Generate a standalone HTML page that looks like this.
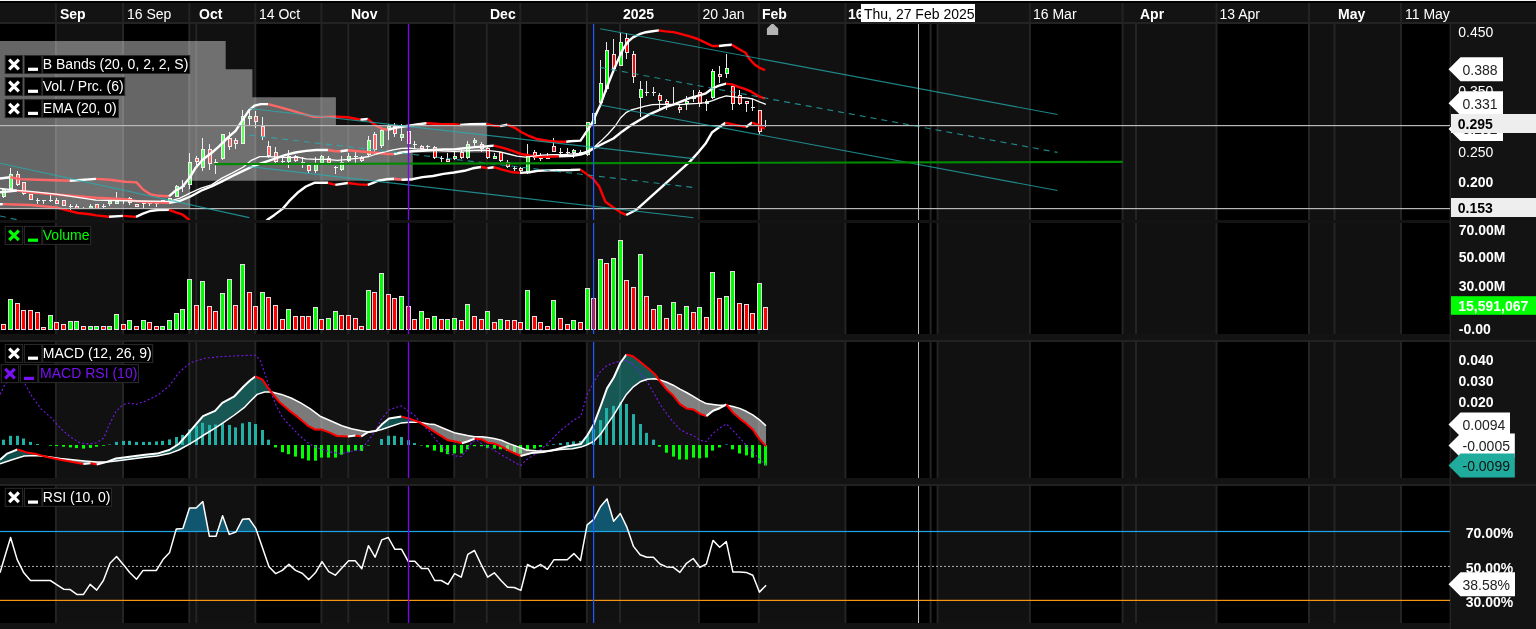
<!DOCTYPE html>
<html><head><meta charset="utf-8"><title>Chart</title><style>html,body{margin:0;padding:0;background:#131313;overflow:hidden}</style></head><body>
<svg width="1536" height="629" viewBox="0 0 1536 629" style="display:block;will-change:transform">
<defs>
<clipPath id="cp0"><rect x="0" y="24" width="1450" height="196"/></clipPath>
<clipPath id="cp1"><rect x="0" y="223" width="1450" height="111"/></clipPath>
<clipPath id="cp2"><rect x="0" y="342" width="1450" height="136"/></clipPath>
<clipPath id="cp3"><rect x="0" y="486" width="1450" height="137"/></clipPath>
</defs>
<rect width="1536" height="629" fill="#131313"/>
<rect x="0" y="0" width="1536" height="1" fill="#f4f4f4"/>
<rect x="0" y="1" width="1536" height="2" fill="#000"/>
<rect x="0" y="24" width="1450" height="196" fill="#000"/>
<rect x="55.9" y="24" width="67.1" height="196" fill="#111111"/>
<rect x="189.3" y="24" width="66.0" height="196" fill="#111111"/>
<rect x="321.4" y="24" width="66.9" height="196" fill="#111111"/>
<rect x="454.3" y="24" width="66.0" height="196" fill="#111111"/>
<rect x="586.9" y="24" width="112.0" height="196" fill="#111111"/>
<rect x="758.8" y="24" width="86.6" height="196" fill="#111111"/>
<rect x="937.6" y="24" width="92.3" height="196" fill="#111111"/>
<rect x="1122.6" y="24" width="93.9" height="196" fill="#111111"/>
<rect x="1309.0" y="24" width="92.0" height="196" fill="#111111"/>
<rect x="54.9" y="24" width="2" height="196" fill="#242424"/>
<rect x="122.0" y="24" width="2" height="196" fill="#242424"/>
<rect x="188.3" y="24" width="2" height="196" fill="#242424"/>
<rect x="254.3" y="24" width="2" height="196" fill="#242424"/>
<rect x="320.4" y="24" width="2" height="196" fill="#242424"/>
<rect x="387.3" y="24" width="2" height="196" fill="#242424"/>
<rect x="453.3" y="24" width="2" height="196" fill="#242424"/>
<rect x="519.3" y="24" width="2" height="196" fill="#242424"/>
<rect x="585.9" y="24" width="2" height="196" fill="#242424"/>
<rect x="697.9" y="24" width="2" height="196" fill="#242424"/>
<rect x="757.8" y="24" width="2" height="196" fill="#242424"/>
<rect x="844.4" y="24" width="2" height="196" fill="#242424"/>
<rect x="936.6" y="24" width="2" height="196" fill="#242424"/>
<rect x="1028.9" y="24" width="2" height="196" fill="#242424"/>
<rect x="1121.6" y="24" width="2" height="196" fill="#242424"/>
<rect x="1215.5" y="24" width="2" height="196" fill="#242424"/>
<rect x="1308.0" y="24" width="2" height="196" fill="#242424"/>
<rect x="1400.0" y="24" width="2" height="196" fill="#242424"/>
<rect x="195.3" y="24" width="2" height="196" fill="#242424"/>
<rect x="347.3" y="24" width="2" height="196" fill="#242424"/>
<rect x="485.8" y="24" width="2" height="196" fill="#242424"/>
<rect x="619.0" y="24" width="2" height="196" fill="#242424"/>
<rect x="929.6" y="24" width="2" height="196" fill="#242424"/>
<rect x="1135.0" y="24" width="2" height="196" fill="#242424"/>
<rect x="1333.5" y="24" width="2" height="196" fill="#242424"/>
<rect x="0" y="223" width="1450" height="111" fill="#000"/>
<rect x="55.9" y="223" width="67.1" height="111" fill="#111111"/>
<rect x="189.3" y="223" width="66.0" height="111" fill="#111111"/>
<rect x="321.4" y="223" width="66.9" height="111" fill="#111111"/>
<rect x="454.3" y="223" width="66.0" height="111" fill="#111111"/>
<rect x="586.9" y="223" width="112.0" height="111" fill="#111111"/>
<rect x="758.8" y="223" width="86.6" height="111" fill="#111111"/>
<rect x="937.6" y="223" width="92.3" height="111" fill="#111111"/>
<rect x="1122.6" y="223" width="93.9" height="111" fill="#111111"/>
<rect x="1309.0" y="223" width="92.0" height="111" fill="#111111"/>
<rect x="54.9" y="223" width="2" height="111" fill="#242424"/>
<rect x="122.0" y="223" width="2" height="111" fill="#242424"/>
<rect x="188.3" y="223" width="2" height="111" fill="#242424"/>
<rect x="254.3" y="223" width="2" height="111" fill="#242424"/>
<rect x="320.4" y="223" width="2" height="111" fill="#242424"/>
<rect x="387.3" y="223" width="2" height="111" fill="#242424"/>
<rect x="453.3" y="223" width="2" height="111" fill="#242424"/>
<rect x="519.3" y="223" width="2" height="111" fill="#242424"/>
<rect x="585.9" y="223" width="2" height="111" fill="#242424"/>
<rect x="697.9" y="223" width="2" height="111" fill="#242424"/>
<rect x="757.8" y="223" width="2" height="111" fill="#242424"/>
<rect x="844.4" y="223" width="2" height="111" fill="#242424"/>
<rect x="936.6" y="223" width="2" height="111" fill="#242424"/>
<rect x="1028.9" y="223" width="2" height="111" fill="#242424"/>
<rect x="1121.6" y="223" width="2" height="111" fill="#242424"/>
<rect x="1215.5" y="223" width="2" height="111" fill="#242424"/>
<rect x="1308.0" y="223" width="2" height="111" fill="#242424"/>
<rect x="1400.0" y="223" width="2" height="111" fill="#242424"/>
<rect x="195.3" y="223" width="2" height="111" fill="#242424"/>
<rect x="347.3" y="223" width="2" height="111" fill="#242424"/>
<rect x="485.8" y="223" width="2" height="111" fill="#242424"/>
<rect x="619.0" y="223" width="2" height="111" fill="#242424"/>
<rect x="929.6" y="223" width="2" height="111" fill="#242424"/>
<rect x="1135.0" y="223" width="2" height="111" fill="#242424"/>
<rect x="1333.5" y="223" width="2" height="111" fill="#242424"/>
<rect x="0" y="342" width="1450" height="136" fill="#000"/>
<rect x="55.9" y="342" width="67.1" height="136" fill="#111111"/>
<rect x="189.3" y="342" width="66.0" height="136" fill="#111111"/>
<rect x="321.4" y="342" width="66.9" height="136" fill="#111111"/>
<rect x="454.3" y="342" width="66.0" height="136" fill="#111111"/>
<rect x="586.9" y="342" width="112.0" height="136" fill="#111111"/>
<rect x="758.8" y="342" width="86.6" height="136" fill="#111111"/>
<rect x="937.6" y="342" width="92.3" height="136" fill="#111111"/>
<rect x="1122.6" y="342" width="93.9" height="136" fill="#111111"/>
<rect x="1309.0" y="342" width="92.0" height="136" fill="#111111"/>
<rect x="54.9" y="342" width="2" height="136" fill="#242424"/>
<rect x="122.0" y="342" width="2" height="136" fill="#242424"/>
<rect x="188.3" y="342" width="2" height="136" fill="#242424"/>
<rect x="254.3" y="342" width="2" height="136" fill="#242424"/>
<rect x="320.4" y="342" width="2" height="136" fill="#242424"/>
<rect x="387.3" y="342" width="2" height="136" fill="#242424"/>
<rect x="453.3" y="342" width="2" height="136" fill="#242424"/>
<rect x="519.3" y="342" width="2" height="136" fill="#242424"/>
<rect x="585.9" y="342" width="2" height="136" fill="#242424"/>
<rect x="697.9" y="342" width="2" height="136" fill="#242424"/>
<rect x="757.8" y="342" width="2" height="136" fill="#242424"/>
<rect x="844.4" y="342" width="2" height="136" fill="#242424"/>
<rect x="936.6" y="342" width="2" height="136" fill="#242424"/>
<rect x="1028.9" y="342" width="2" height="136" fill="#242424"/>
<rect x="1121.6" y="342" width="2" height="136" fill="#242424"/>
<rect x="1215.5" y="342" width="2" height="136" fill="#242424"/>
<rect x="1308.0" y="342" width="2" height="136" fill="#242424"/>
<rect x="1400.0" y="342" width="2" height="136" fill="#242424"/>
<rect x="195.3" y="342" width="2" height="136" fill="#242424"/>
<rect x="347.3" y="342" width="2" height="136" fill="#242424"/>
<rect x="485.8" y="342" width="2" height="136" fill="#242424"/>
<rect x="619.0" y="342" width="2" height="136" fill="#242424"/>
<rect x="929.6" y="342" width="2" height="136" fill="#242424"/>
<rect x="1135.0" y="342" width="2" height="136" fill="#242424"/>
<rect x="1333.5" y="342" width="2" height="136" fill="#242424"/>
<rect x="0" y="486" width="1450" height="137" fill="#000"/>
<rect x="55.9" y="486" width="67.1" height="137" fill="#111111"/>
<rect x="189.3" y="486" width="66.0" height="137" fill="#111111"/>
<rect x="321.4" y="486" width="66.9" height="137" fill="#111111"/>
<rect x="454.3" y="486" width="66.0" height="137" fill="#111111"/>
<rect x="586.9" y="486" width="112.0" height="137" fill="#111111"/>
<rect x="758.8" y="486" width="86.6" height="137" fill="#111111"/>
<rect x="937.6" y="486" width="92.3" height="137" fill="#111111"/>
<rect x="1122.6" y="486" width="93.9" height="137" fill="#111111"/>
<rect x="1309.0" y="486" width="92.0" height="137" fill="#111111"/>
<rect x="54.9" y="486" width="2" height="137" fill="#242424"/>
<rect x="122.0" y="486" width="2" height="137" fill="#242424"/>
<rect x="188.3" y="486" width="2" height="137" fill="#242424"/>
<rect x="254.3" y="486" width="2" height="137" fill="#242424"/>
<rect x="320.4" y="486" width="2" height="137" fill="#242424"/>
<rect x="387.3" y="486" width="2" height="137" fill="#242424"/>
<rect x="453.3" y="486" width="2" height="137" fill="#242424"/>
<rect x="519.3" y="486" width="2" height="137" fill="#242424"/>
<rect x="585.9" y="486" width="2" height="137" fill="#242424"/>
<rect x="697.9" y="486" width="2" height="137" fill="#242424"/>
<rect x="757.8" y="486" width="2" height="137" fill="#242424"/>
<rect x="844.4" y="486" width="2" height="137" fill="#242424"/>
<rect x="936.6" y="486" width="2" height="137" fill="#242424"/>
<rect x="1028.9" y="486" width="2" height="137" fill="#242424"/>
<rect x="1121.6" y="486" width="2" height="137" fill="#242424"/>
<rect x="1215.5" y="486" width="2" height="137" fill="#242424"/>
<rect x="1308.0" y="486" width="2" height="137" fill="#242424"/>
<rect x="1400.0" y="486" width="2" height="137" fill="#242424"/>
<rect x="195.3" y="486" width="2" height="137" fill="#242424"/>
<rect x="347.3" y="486" width="2" height="137" fill="#242424"/>
<rect x="485.8" y="486" width="2" height="137" fill="#242424"/>
<rect x="619.0" y="486" width="2" height="137" fill="#242424"/>
<rect x="929.6" y="486" width="2" height="137" fill="#242424"/>
<rect x="1135.0" y="486" width="2" height="137" fill="#242424"/>
<rect x="1333.5" y="486" width="2" height="137" fill="#242424"/>
<rect x="0" y="340" width="1536" height="2" fill="#222222"/>
<rect x="0" y="484" width="1536" height="2" fill="#222222"/>
<rect x="0" y="22" width="1536" height="2" fill="#232323"/>
<rect x="54.9" y="3" width="2" height="19" fill="#232323"/>
<rect x="122.0" y="3" width="2" height="19" fill="#232323"/>
<rect x="188.3" y="3" width="2" height="19" fill="#232323"/>
<rect x="254.3" y="3" width="2" height="19" fill="#232323"/>
<rect x="320.4" y="3" width="2" height="19" fill="#232323"/>
<rect x="387.3" y="3" width="2" height="19" fill="#232323"/>
<rect x="453.3" y="3" width="2" height="19" fill="#232323"/>
<rect x="519.3" y="3" width="2" height="19" fill="#232323"/>
<rect x="585.9" y="3" width="2" height="19" fill="#232323"/>
<rect x="697.9" y="3" width="2" height="19" fill="#232323"/>
<rect x="757.8" y="3" width="2" height="19" fill="#232323"/>
<rect x="844.4" y="3" width="2" height="19" fill="#232323"/>
<rect x="936.6" y="3" width="2" height="19" fill="#232323"/>
<rect x="1028.9" y="3" width="2" height="19" fill="#232323"/>
<rect x="1121.6" y="3" width="2" height="19" fill="#232323"/>
<rect x="1215.5" y="3" width="2" height="19" fill="#232323"/>
<rect x="1308.0" y="3" width="2" height="19" fill="#232323"/>
<rect x="1400.0" y="3" width="2" height="19" fill="#232323"/>
<rect x="1449.5" y="24" width="1.5" height="605" fill="#232323"/>
<text x="60" y="19" font-family="Liberation Sans, Arial, sans-serif" font-size="14" fill="#fff" font-weight="bold">Sep</text>
<text x="127" y="19" font-family="Liberation Sans, Arial, sans-serif" font-size="14" fill="#fff">16 Sep</text>
<text x="199" y="19" font-family="Liberation Sans, Arial, sans-serif" font-size="14" fill="#fff" font-weight="bold">Oct</text>
<text x="259" y="19" font-family="Liberation Sans, Arial, sans-serif" font-size="14" fill="#fff">14 Oct</text>
<text x="351" y="19" font-family="Liberation Sans, Arial, sans-serif" font-size="14" fill="#fff" font-weight="bold">Nov</text>
<text x="490" y="19" font-family="Liberation Sans, Arial, sans-serif" font-size="14" fill="#fff" font-weight="bold">Dec</text>
<text x="623" y="19" font-family="Liberation Sans, Arial, sans-serif" font-size="14" fill="#fff" font-weight="bold">2025</text>
<text x="702.5" y="19" font-family="Liberation Sans, Arial, sans-serif" font-size="14" fill="#fff">20 Jan</text>
<text x="762" y="19" font-family="Liberation Sans, Arial, sans-serif" font-size="14" fill="#fff" font-weight="bold">Feb</text>
<text x="848" y="19" font-family="Liberation Sans, Arial, sans-serif" font-size="14" fill="#fff" font-weight="bold">16 Feb</text>
<text x="1033" y="19" font-family="Liberation Sans, Arial, sans-serif" font-size="14" fill="#fff">16 Mar</text>
<text x="1140" y="19" font-family="Liberation Sans, Arial, sans-serif" font-size="14" fill="#fff" font-weight="bold">Apr</text>
<text x="1219.5" y="19" font-family="Liberation Sans, Arial, sans-serif" font-size="14" fill="#fff">13 Apr</text>
<text x="1338" y="19" font-family="Liberation Sans, Arial, sans-serif" font-size="14" fill="#fff" font-weight="bold">May</text>
<text x="1405" y="19" font-family="Liberation Sans, Arial, sans-serif" font-size="14" fill="#fff">11 May</text>
<rect x="861" y="4" width="114" height="18" fill="#fff"/>
<text x="864" y="18.5" font-family="Liberation Sans, Arial, sans-serif" font-size="14" fill="#000">Thu, 27 Feb 2025</text>
<g clip-path="url(#cp0)">
<rect x="3" y="188" width="1" height="10" fill="#e6e6e6"/>
<rect x="2" y="189" width="4" height="8" fill="#e6e6e6"/>
<rect x="3" y="190" width="2" height="6" fill="#00ff00"/>
<rect x="10" y="168" width="1" height="22" fill="#e6e6e6"/>
<rect x="9" y="174" width="4" height="15" fill="#e6e6e6"/>
<rect x="10" y="175" width="2" height="13" fill="#00ff00"/>
<rect x="17" y="171" width="1" height="15" fill="#e6e6e6"/>
<rect x="16" y="174" width="4" height="11" fill="#e6e6e6"/>
<rect x="17" y="175" width="2" height="9" fill="#ff0000"/>
<rect x="23" y="182" width="1" height="13" fill="#e6e6e6"/>
<rect x="22" y="182" width="4" height="12" fill="#e6e6e6"/>
<rect x="23" y="183" width="2" height="10" fill="#ff0000"/>
<rect x="30" y="194" width="1" height="6" fill="#e6e6e6"/>
<rect x="29" y="194" width="4" height="6" fill="#e6e6e6"/>
<rect x="30" y="195" width="2" height="4" fill="#ff0000"/>
<rect x="37" y="198" width="1" height="6" fill="#e6e6e6"/>
<rect x="36" y="200" width="4" height="1" fill="#e6e6e6"/>
<rect x="43" y="201" width="1" height="3" fill="#e6e6e6"/>
<rect x="42" y="200" width="4" height="1" fill="#e6e6e6"/>
<rect x="50" y="195" width="1" height="7" fill="#e6e6e6"/>
<rect x="49" y="200" width="4" height="1" fill="#e6e6e6"/>
<rect x="56" y="198" width="1" height="6" fill="#e6e6e6"/>
<rect x="55" y="200" width="4" height="4" fill="#e6e6e6"/>
<rect x="56" y="201" width="2" height="2" fill="#ff0000"/>
<rect x="63" y="200" width="1" height="6" fill="#e6e6e6"/>
<rect x="62" y="200" width="4" height="6" fill="#e6e6e6"/>
<rect x="63" y="201" width="2" height="4" fill="#ff0000"/>
<rect x="70" y="204" width="1" height="6" fill="#e6e6e6"/>
<rect x="69" y="206" width="4" height="1" fill="#e6e6e6"/>
<rect x="76" y="204" width="1" height="5" fill="#e6e6e6"/>
<rect x="75" y="206" width="4" height="3" fill="#e6e6e6"/>
<rect x="76" y="207" width="2" height="1" fill="#ff0000"/>
<rect x="83" y="207" width="1" height="2" fill="#e6e6e6"/>
<rect x="82" y="208" width="4" height="1" fill="#e6e6e6"/>
<rect x="90" y="204" width="1" height="4" fill="#e6e6e6"/>
<rect x="89" y="206" width="4" height="3" fill="#e6e6e6"/>
<rect x="90" y="207" width="2" height="1" fill="#00ff00"/>
<rect x="96" y="204" width="1" height="5" fill="#e6e6e6"/>
<rect x="95" y="204" width="4" height="5" fill="#e6e6e6"/>
<rect x="96" y="205" width="2" height="3" fill="#ff0000"/>
<rect x="103" y="204" width="1" height="4" fill="#e6e6e6"/>
<rect x="102" y="206" width="4" height="1" fill="#e6e6e6"/>
<rect x="109" y="201" width="1" height="5" fill="#e6e6e6"/>
<rect x="108" y="201" width="4" height="3" fill="#e6e6e6"/>
<rect x="109" y="202" width="2" height="1" fill="#00ff00"/>
<rect x="116" y="192" width="1" height="12" fill="#e6e6e6"/>
<rect x="115" y="201" width="4" height="3" fill="#e6e6e6"/>
<rect x="116" y="202" width="2" height="1" fill="#00ff00"/>
<rect x="123" y="201" width="1" height="3" fill="#e6e6e6"/>
<rect x="122" y="200" width="4" height="1" fill="#e6e6e6"/>
<rect x="129" y="197" width="1" height="8" fill="#e6e6e6"/>
<rect x="128" y="198" width="4" height="5" fill="#e6e6e6"/>
<rect x="129" y="199" width="2" height="3" fill="#ff0000"/>
<rect x="136" y="204" width="1" height="2" fill="#e6e6e6"/>
<rect x="135" y="204" width="4" height="3" fill="#e6e6e6"/>
<rect x="136" y="205" width="2" height="1" fill="#ff0000"/>
<rect x="143" y="204" width="1" height="4" fill="#e6e6e6"/>
<rect x="142" y="203" width="4" height="1" fill="#e6e6e6"/>
<rect x="149" y="204" width="1" height="2" fill="#e6e6e6"/>
<rect x="148" y="203" width="4" height="1" fill="#e6e6e6"/>
<rect x="156" y="204" width="1" height="3" fill="#e6e6e6"/>
<rect x="155" y="203" width="4" height="1" fill="#e6e6e6"/>
<rect x="161" y="200" width="4" height="1" fill="#e6e6e6"/>
<rect x="169" y="198" width="1" height="2" fill="#e6e6e6"/>
<rect x="168" y="198" width="4" height="3" fill="#e6e6e6"/>
<rect x="169" y="199" width="2" height="1" fill="#00ff00"/>
<rect x="176" y="185" width="1" height="12" fill="#e6e6e6"/>
<rect x="175" y="186" width="4" height="11" fill="#e6e6e6"/>
<rect x="176" y="187" width="2" height="9" fill="#00ff00"/>
<rect x="182" y="180" width="1" height="12" fill="#e6e6e6"/>
<rect x="181" y="186" width="4" height="1" fill="#e6e6e6"/>
<rect x="189" y="153" width="1" height="36" fill="#e6e6e6"/>
<rect x="188" y="162" width="4" height="23" fill="#e6e6e6"/>
<rect x="189" y="163" width="2" height="21" fill="#00ff00"/>
<rect x="196" y="156" width="1" height="11" fill="#e6e6e6"/>
<rect x="195" y="158" width="4" height="4" fill="#e6e6e6"/>
<rect x="196" y="159" width="2" height="2" fill="#ff0000"/>
<rect x="202" y="138" width="1" height="33" fill="#e6e6e6"/>
<rect x="201" y="149" width="4" height="19" fill="#e6e6e6"/>
<rect x="202" y="150" width="2" height="17" fill="#00ff00"/>
<rect x="209" y="144" width="1" height="26" fill="#e6e6e6"/>
<rect x="208" y="149" width="4" height="15" fill="#e6e6e6"/>
<rect x="209" y="150" width="2" height="13" fill="#ff0000"/>
<rect x="215" y="159" width="1" height="15" fill="#e6e6e6"/>
<rect x="214" y="162" width="4" height="1" fill="#e6e6e6"/>
<rect x="222" y="134" width="1" height="26" fill="#e6e6e6"/>
<rect x="221" y="134" width="4" height="25" fill="#e6e6e6"/>
<rect x="222" y="135" width="2" height="23" fill="#00ff00"/>
<rect x="229" y="132" width="1" height="18" fill="#e6e6e6"/>
<rect x="228" y="138" width="4" height="9" fill="#e6e6e6"/>
<rect x="229" y="139" width="2" height="7" fill="#ff0000"/>
<rect x="235" y="138" width="1" height="11" fill="#e6e6e6"/>
<rect x="234" y="140" width="4" height="4" fill="#e6e6e6"/>
<rect x="235" y="141" width="2" height="2" fill="#ff0000"/>
<rect x="242" y="110" width="1" height="34" fill="#e6e6e6"/>
<rect x="241" y="116" width="4" height="28" fill="#e6e6e6"/>
<rect x="242" y="117" width="2" height="26" fill="#00ff00"/>
<rect x="249" y="110" width="1" height="15" fill="#e6e6e6"/>
<rect x="248" y="116" width="4" height="3" fill="#e6e6e6"/>
<rect x="249" y="117" width="2" height="1" fill="#00ff00"/>
<rect x="255" y="111" width="1" height="17" fill="#e6e6e6"/>
<rect x="254" y="116" width="4" height="6" fill="#e6e6e6"/>
<rect x="255" y="117" width="2" height="4" fill="#ff0000"/>
<rect x="262" y="117" width="1" height="23" fill="#e6e6e6"/>
<rect x="261" y="126" width="4" height="11" fill="#e6e6e6"/>
<rect x="262" y="127" width="2" height="9" fill="#ff0000"/>
<rect x="268" y="141" width="1" height="17" fill="#e6e6e6"/>
<rect x="267" y="146" width="4" height="10" fill="#e6e6e6"/>
<rect x="268" y="147" width="2" height="8" fill="#ff0000"/>
<rect x="275" y="147" width="1" height="17" fill="#e6e6e6"/>
<rect x="274" y="152" width="4" height="10" fill="#e6e6e6"/>
<rect x="275" y="153" width="2" height="8" fill="#ff0000"/>
<rect x="282" y="156" width="1" height="8" fill="#e6e6e6"/>
<rect x="281" y="161" width="4" height="1" fill="#e6e6e6"/>
<rect x="288" y="150" width="1" height="18" fill="#e6e6e6"/>
<rect x="287" y="156" width="4" height="6" fill="#e6e6e6"/>
<rect x="288" y="157" width="2" height="4" fill="#00ff00"/>
<rect x="295" y="155" width="1" height="7" fill="#e6e6e6"/>
<rect x="294" y="156" width="4" height="5" fill="#e6e6e6"/>
<rect x="295" y="157" width="2" height="3" fill="#ff0000"/>
<rect x="302" y="157" width="1" height="11" fill="#e6e6e6"/>
<rect x="301" y="162" width="4" height="1" fill="#e6e6e6"/>
<rect x="308" y="164" width="1" height="9" fill="#e6e6e6"/>
<rect x="307" y="165" width="4" height="6" fill="#e6e6e6"/>
<rect x="308" y="166" width="2" height="4" fill="#ff0000"/>
<rect x="315" y="157" width="1" height="16" fill="#e6e6e6"/>
<rect x="314" y="164" width="4" height="7" fill="#e6e6e6"/>
<rect x="315" y="165" width="2" height="5" fill="#00ff00"/>
<rect x="321" y="155" width="1" height="9" fill="#e6e6e6"/>
<rect x="320" y="156" width="4" height="7" fill="#e6e6e6"/>
<rect x="321" y="157" width="2" height="5" fill="#00ff00"/>
<rect x="328" y="156" width="1" height="8" fill="#e6e6e6"/>
<rect x="327" y="158" width="4" height="5" fill="#e6e6e6"/>
<rect x="328" y="159" width="2" height="3" fill="#ff0000"/>
<rect x="335" y="166" width="1" height="8" fill="#e6e6e6"/>
<rect x="334" y="167" width="4" height="1" fill="#e6e6e6"/>
<rect x="341" y="156" width="1" height="15" fill="#e6e6e6"/>
<rect x="340" y="162" width="4" height="8" fill="#e6e6e6"/>
<rect x="341" y="163" width="2" height="6" fill="#00ff00"/>
<rect x="348" y="153" width="1" height="9" fill="#e6e6e6"/>
<rect x="347" y="156" width="4" height="5" fill="#e6e6e6"/>
<rect x="348" y="157" width="2" height="3" fill="#00ff00"/>
<rect x="355" y="152" width="1" height="12" fill="#e6e6e6"/>
<rect x="354" y="156" width="4" height="1" fill="#e6e6e6"/>
<rect x="361" y="156" width="1" height="6" fill="#e6e6e6"/>
<rect x="360" y="158" width="4" height="3" fill="#e6e6e6"/>
<rect x="361" y="159" width="2" height="1" fill="#ff0000"/>
<rect x="368" y="136" width="1" height="20" fill="#e6e6e6"/>
<rect x="367" y="140" width="4" height="15" fill="#e6e6e6"/>
<rect x="368" y="141" width="2" height="13" fill="#00ff00"/>
<rect x="374" y="132" width="1" height="20" fill="#e6e6e6"/>
<rect x="373" y="134" width="4" height="16" fill="#e6e6e6"/>
<rect x="374" y="135" width="2" height="14" fill="#ff0000"/>
<rect x="381" y="129" width="1" height="19" fill="#e6e6e6"/>
<rect x="380" y="130" width="4" height="16" fill="#e6e6e6"/>
<rect x="381" y="131" width="2" height="14" fill="#00ff00"/>
<rect x="388" y="124" width="1" height="16" fill="#e6e6e6"/>
<rect x="387" y="126" width="4" height="3" fill="#e6e6e6"/>
<rect x="388" y="127" width="2" height="1" fill="#00ff00"/>
<rect x="394" y="123" width="1" height="14" fill="#e6e6e6"/>
<rect x="393" y="126" width="4" height="8" fill="#e6e6e6"/>
<rect x="394" y="127" width="2" height="6" fill="#ff0000"/>
<rect x="401" y="124" width="1" height="17" fill="#e6e6e6"/>
<rect x="400" y="134" width="4" height="4" fill="#e6e6e6"/>
<rect x="401" y="135" width="2" height="2" fill="#00ff00"/>
<rect x="408" y="126" width="1" height="18" fill="#e6e6e6"/>
<rect x="407" y="131" width="4" height="13" fill="#e6e6e6"/>
<rect x="408" y="132" width="2" height="11" fill="#ff0000"/>
<rect x="414" y="141" width="1" height="7" fill="#e6e6e6"/>
<rect x="413" y="144" width="4" height="1" fill="#e6e6e6"/>
<rect x="421" y="145" width="1" height="5" fill="#e6e6e6"/>
<rect x="420" y="146" width="4" height="3" fill="#e6e6e6"/>
<rect x="421" y="147" width="2" height="1" fill="#ff0000"/>
<rect x="427" y="145" width="1" height="5" fill="#e6e6e6"/>
<rect x="426" y="146" width="4" height="1" fill="#e6e6e6"/>
<rect x="434" y="146" width="1" height="13" fill="#e6e6e6"/>
<rect x="433" y="147" width="4" height="11" fill="#e6e6e6"/>
<rect x="434" y="148" width="2" height="9" fill="#ff0000"/>
<rect x="441" y="156" width="1" height="6" fill="#e6e6e6"/>
<rect x="440" y="158" width="4" height="1" fill="#e6e6e6"/>
<rect x="447" y="153" width="1" height="9" fill="#e6e6e6"/>
<rect x="446" y="159" width="4" height="3" fill="#e6e6e6"/>
<rect x="447" y="160" width="2" height="1" fill="#ff0000"/>
<rect x="454" y="151" width="1" height="9" fill="#e6e6e6"/>
<rect x="453" y="156" width="4" height="3" fill="#e6e6e6"/>
<rect x="454" y="157" width="2" height="1" fill="#00ff00"/>
<rect x="461" y="150" width="1" height="9" fill="#e6e6e6"/>
<rect x="460" y="152" width="4" height="6" fill="#e6e6e6"/>
<rect x="461" y="153" width="2" height="4" fill="#ff0000"/>
<rect x="467" y="141" width="1" height="18" fill="#e6e6e6"/>
<rect x="466" y="144" width="4" height="14" fill="#e6e6e6"/>
<rect x="467" y="145" width="2" height="12" fill="#00ff00"/>
<rect x="474" y="138" width="1" height="8" fill="#e6e6e6"/>
<rect x="473" y="140" width="4" height="3" fill="#e6e6e6"/>
<rect x="474" y="141" width="2" height="1" fill="#00ff00"/>
<rect x="481" y="142" width="1" height="10" fill="#e6e6e6"/>
<rect x="480" y="144" width="4" height="5" fill="#e6e6e6"/>
<rect x="481" y="145" width="2" height="3" fill="#ff0000"/>
<rect x="487" y="145" width="1" height="14" fill="#e6e6e6"/>
<rect x="486" y="148" width="4" height="10" fill="#e6e6e6"/>
<rect x="487" y="149" width="2" height="8" fill="#ff0000"/>
<rect x="494" y="153" width="1" height="6" fill="#e6e6e6"/>
<rect x="493" y="156" width="4" height="3" fill="#e6e6e6"/>
<rect x="494" y="157" width="2" height="1" fill="#00ff00"/>
<rect x="500" y="152" width="1" height="10" fill="#e6e6e6"/>
<rect x="499" y="152" width="4" height="9" fill="#e6e6e6"/>
<rect x="500" y="153" width="2" height="7" fill="#ff0000"/>
<rect x="507" y="160" width="1" height="8" fill="#e6e6e6"/>
<rect x="506" y="162" width="4" height="5" fill="#e6e6e6"/>
<rect x="507" y="163" width="2" height="3" fill="#ff0000"/>
<rect x="514" y="166" width="1" height="5" fill="#e6e6e6"/>
<rect x="513" y="168" width="4" height="1" fill="#e6e6e6"/>
<rect x="520" y="167" width="1" height="5" fill="#e6e6e6"/>
<rect x="519" y="168" width="4" height="3" fill="#e6e6e6"/>
<rect x="520" y="169" width="2" height="1" fill="#ff0000"/>
<rect x="527" y="144" width="1" height="30" fill="#e6e6e6"/>
<rect x="526" y="156" width="4" height="16" fill="#e6e6e6"/>
<rect x="527" y="157" width="2" height="14" fill="#00ff00"/>
<rect x="534" y="150" width="1" height="10" fill="#e6e6e6"/>
<rect x="533" y="152" width="4" height="6" fill="#e6e6e6"/>
<rect x="534" y="153" width="2" height="4" fill="#ff0000"/>
<rect x="540" y="153" width="1" height="8" fill="#e6e6e6"/>
<rect x="539" y="156" width="4" height="3" fill="#e6e6e6"/>
<rect x="540" y="157" width="2" height="1" fill="#00ff00"/>
<rect x="547" y="153" width="1" height="6" fill="#e6e6e6"/>
<rect x="546" y="156" width="4" height="3" fill="#e6e6e6"/>
<rect x="547" y="157" width="2" height="1" fill="#ff0000"/>
<rect x="553" y="138" width="1" height="14" fill="#e6e6e6"/>
<rect x="552" y="146" width="4" height="6" fill="#e6e6e6"/>
<rect x="553" y="147" width="2" height="4" fill="#ff0000"/>
<rect x="560" y="148" width="1" height="9" fill="#e6e6e6"/>
<rect x="559" y="152" width="4" height="1" fill="#e6e6e6"/>
<rect x="567" y="148" width="1" height="7" fill="#e6e6e6"/>
<rect x="566" y="152" width="4" height="1" fill="#e6e6e6"/>
<rect x="573" y="149" width="1" height="9" fill="#e6e6e6"/>
<rect x="572" y="150" width="4" height="3" fill="#e6e6e6"/>
<rect x="573" y="151" width="2" height="1" fill="#00ff00"/>
<rect x="580" y="150" width="1" height="4" fill="#e6e6e6"/>
<rect x="579" y="152" width="4" height="1" fill="#e6e6e6"/>
<rect x="587" y="122" width="1" height="34" fill="#e6e6e6"/>
<rect x="586" y="122" width="4" height="33" fill="#e6e6e6"/>
<rect x="587" y="123" width="2" height="31" fill="#00ff00"/>
<rect x="593" y="113" width="1" height="11" fill="#e6e6e6"/>
<rect x="592" y="113" width="4" height="11" fill="#e6e6e6"/>
<rect x="593" y="114" width="2" height="9" fill="#00ff00"/>
<rect x="600" y="60" width="1" height="45" fill="#e6e6e6"/>
<rect x="599" y="83" width="4" height="20" fill="#e6e6e6"/>
<rect x="600" y="84" width="2" height="18" fill="#00ff00"/>
<rect x="606" y="42" width="1" height="50" fill="#e6e6e6"/>
<rect x="605" y="50" width="4" height="39" fill="#e6e6e6"/>
<rect x="606" y="51" width="2" height="37" fill="#00ff00"/>
<rect x="613" y="39" width="1" height="31" fill="#e6e6e6"/>
<rect x="612" y="54" width="4" height="15" fill="#e6e6e6"/>
<rect x="613" y="55" width="2" height="13" fill="#ff0000"/>
<rect x="620" y="33" width="1" height="33" fill="#e6e6e6"/>
<rect x="619" y="42" width="4" height="24" fill="#e6e6e6"/>
<rect x="620" y="43" width="2" height="22" fill="#00ff00"/>
<rect x="626" y="33" width="1" height="26" fill="#e6e6e6"/>
<rect x="625" y="38" width="4" height="15" fill="#e6e6e6"/>
<rect x="626" y="39" width="2" height="13" fill="#ff0000"/>
<rect x="633" y="51" width="1" height="32" fill="#e6e6e6"/>
<rect x="632" y="54" width="4" height="23" fill="#e6e6e6"/>
<rect x="633" y="55" width="2" height="21" fill="#ff0000"/>
<rect x="640" y="81" width="1" height="36" fill="#e6e6e6"/>
<rect x="639" y="89" width="4" height="9" fill="#e6e6e6"/>
<rect x="640" y="90" width="2" height="7" fill="#00ff00"/>
<rect x="646" y="81" width="1" height="15" fill="#e6e6e6"/>
<rect x="645" y="92" width="4" height="1" fill="#e6e6e6"/>
<rect x="653" y="87" width="1" height="9" fill="#e6e6e6"/>
<rect x="652" y="92" width="4" height="1" fill="#e6e6e6"/>
<rect x="659" y="93" width="1" height="17" fill="#e6e6e6"/>
<rect x="658" y="95" width="4" height="6" fill="#e6e6e6"/>
<rect x="659" y="96" width="2" height="4" fill="#ff0000"/>
<rect x="666" y="99" width="1" height="11" fill="#e6e6e6"/>
<rect x="665" y="101" width="4" height="3" fill="#e6e6e6"/>
<rect x="666" y="102" width="2" height="1" fill="#ff0000"/>
<rect x="673" y="87" width="1" height="18" fill="#e6e6e6"/>
<rect x="672" y="104" width="4" height="1" fill="#e6e6e6"/>
<rect x="679" y="104" width="1" height="9" fill="#e6e6e6"/>
<rect x="678" y="107" width="4" height="3" fill="#e6e6e6"/>
<rect x="679" y="108" width="2" height="1" fill="#ff0000"/>
<rect x="686" y="96" width="1" height="14" fill="#e6e6e6"/>
<rect x="685" y="101" width="4" height="3" fill="#e6e6e6"/>
<rect x="686" y="102" width="2" height="1" fill="#00ff00"/>
<rect x="693" y="90" width="1" height="12" fill="#e6e6e6"/>
<rect x="692" y="96" width="4" height="3" fill="#e6e6e6"/>
<rect x="693" y="97" width="2" height="1" fill="#00ff00"/>
<rect x="699" y="90" width="1" height="17" fill="#e6e6e6"/>
<rect x="698" y="92" width="4" height="12" fill="#e6e6e6"/>
<rect x="699" y="93" width="2" height="10" fill="#ff0000"/>
<rect x="706" y="99" width="1" height="12" fill="#e6e6e6"/>
<rect x="705" y="101" width="4" height="3" fill="#e6e6e6"/>
<rect x="706" y="102" width="2" height="1" fill="#00ff00"/>
<rect x="712" y="69" width="1" height="30" fill="#e6e6e6"/>
<rect x="711" y="71" width="4" height="27" fill="#e6e6e6"/>
<rect x="712" y="72" width="2" height="25" fill="#00ff00"/>
<rect x="719" y="66" width="1" height="17" fill="#e6e6e6"/>
<rect x="718" y="74" width="4" height="3" fill="#e6e6e6"/>
<rect x="719" y="75" width="2" height="1" fill="#ff0000"/>
<rect x="726" y="54" width="1" height="24" fill="#e6e6e6"/>
<rect x="725" y="68" width="4" height="6" fill="#e6e6e6"/>
<rect x="726" y="69" width="2" height="4" fill="#00ff00"/>
<rect x="732" y="86" width="1" height="24" fill="#e6e6e6"/>
<rect x="731" y="86" width="4" height="18" fill="#e6e6e6"/>
<rect x="732" y="87" width="2" height="16" fill="#ff0000"/>
<rect x="739" y="90" width="1" height="15" fill="#e6e6e6"/>
<rect x="738" y="95" width="4" height="9" fill="#e6e6e6"/>
<rect x="739" y="96" width="2" height="7" fill="#ff0000"/>
<rect x="746" y="101" width="1" height="11" fill="#e6e6e6"/>
<rect x="745" y="101" width="4" height="3" fill="#e6e6e6"/>
<rect x="746" y="102" width="2" height="1" fill="#ff0000"/>
<rect x="752" y="99" width="1" height="12" fill="#e6e6e6"/>
<rect x="751" y="107" width="4" height="1" fill="#e6e6e6"/>
<rect x="759" y="110" width="1" height="24" fill="#e6e6e6"/>
<rect x="758" y="110" width="4" height="22" fill="#e6e6e6"/>
<rect x="759" y="111" width="2" height="20" fill="#ff0000"/>
<rect x="765" y="120" width="1" height="7" fill="#e6e6e6"/>
<rect x="764" y="125" width="4" height="1" fill="#e6e6e6"/>
<polyline points="0.0,178.5 10.4,177.2" fill="none" stroke="#ffffff" stroke-width="2.4" stroke-linejoin="round" stroke-linecap="butt"/>
<polyline points="10.4,177.2 20.0,179.1 39.0,179.8 69.8,180.7" fill="none" stroke="#ff0000" stroke-width="2.4" stroke-linejoin="round" stroke-linecap="butt"/>
<polyline points="69.8,180.7 96.0,178.9" fill="none" stroke="#ffffff" stroke-width="2.4" stroke-linejoin="round" stroke-linecap="butt"/>
<polyline points="96.0,178.9 110.0,179.8 125.0,181.7 136.5,182.4 143.0,189.5 150.0,194.1 158.0,195.8 169.0,196.3" fill="none" stroke="#ff0000" stroke-width="2.4" stroke-linejoin="round" stroke-linecap="butt"/>
<polyline points="169.0,196.3 176.0,190.2 182.0,187.2 189.4,178.1 195.7,167.7 203.1,159.3 211.5,153.0 218.8,146.7 228.3,137.2 235.6,130.9 243.0,119.4 249.3,109.9 254.5,105.7 260.8,104.1 268.1,104.1" fill="none" stroke="#ffffff" stroke-width="2.4" stroke-linejoin="round" stroke-linecap="butt"/>
<polyline points="268.1,104.1 278.6,106.8 291.2,110.4 303.8,114.1 314.3,116.9 326.9,116.9 335.3,116.7 347.9,117.3 360.5,119.8" fill="none" stroke="#ff0000" stroke-width="2.4" stroke-linejoin="round" stroke-linecap="butt"/>
<polyline points="360.5,119.8 367.8,119.0" fill="none" stroke="#ffffff" stroke-width="2.4" stroke-linejoin="round" stroke-linecap="butt"/>
<polyline points="367.8,119.0 373.1,123.6 376.3,125.7 382.6,128.8 387.8,129.9" fill="none" stroke="#ff0000" stroke-width="2.4" stroke-linejoin="round" stroke-linecap="butt"/>
<polyline points="387.8,129.9 395.2,127.8 401.5,126.7 408.8,125.7 418.3,124.2 426.7,123.2" fill="none" stroke="#ffffff" stroke-width="2.4" stroke-linejoin="round" stroke-linecap="butt"/>
<polyline points="426.7,123.2 439.3,124.0 454.0,124.2 460.2,125.0" fill="none" stroke="#ff0000" stroke-width="2.4" stroke-linejoin="round" stroke-linecap="butt"/>
<polyline points="460.2,125.0 470.7,124.2 486.5,124.0" fill="none" stroke="#ffffff" stroke-width="2.4" stroke-linejoin="round" stroke-linecap="butt"/>
<polyline points="486.5,124.0 493.8,125.7 500.1,126.1" fill="none" stroke="#ff0000" stroke-width="2.4" stroke-linejoin="round" stroke-linecap="butt"/>
<polyline points="500.1,126.1 507.5,124.6" fill="none" stroke="#ffffff" stroke-width="2.4" stroke-linejoin="round" stroke-linecap="butt"/>
<polyline points="507.5,124.6 514.8,127.8 521.1,132.0 529.5,136.2 537.9,139.3 548.4,141.0 558.9,141.8 566.2,141.8" fill="none" stroke="#ff0000" stroke-width="2.4" stroke-linejoin="round" stroke-linecap="butt"/>
<polyline points="566.2,141.8 570.0,141.2 580.5,140.6 586.7,131.4 592.4,122.5 596.0,114.2 600.5,104.7 604.6,93.3 608.6,82.8 613.5,70.6 618.4,59.3 623.2,48.8 628.1,41.5 633.0,37.4 639.4,34.2 645.9,32.2 652.4,31.2 658.9,30.4" fill="none" stroke="#ffffff" stroke-width="2.4" stroke-linejoin="round" stroke-linecap="butt"/>
<polyline points="658.9,30.4 665.4,31.4 673.5,32.1 681.6,34.2 689.7,36.3 697.8,39.0 705.9,42.8 712.4,46.0 718.9,46.0" fill="none" stroke="#ff0000" stroke-width="2.4" stroke-linejoin="round" stroke-linecap="butt"/>
<polyline points="718.9,46.0 725.4,45.2 731.9,44.7" fill="none" stroke="#ffffff" stroke-width="2.4" stroke-linejoin="round" stroke-linecap="butt"/>
<polyline points="731.9,44.7 738.3,48.8 745.6,52.8 749.7,59.3 754.6,64.5 760.2,68.2 765.1,70.2" fill="none" stroke="#ff0000" stroke-width="2.4" stroke-linejoin="round" stroke-linecap="butt"/>
<polyline points="0.0,192.3 17.0,190.6" fill="none" stroke="#ffffff" stroke-width="2.4" stroke-linejoin="round" stroke-linecap="butt"/>
<polyline points="17.0,190.6 30.0,192.3 56.0,194.5 96.0,197.8 125.0,199.3 137.0,201.3 150.0,202.3 169.0,202.8" fill="none" stroke="#ff0000" stroke-width="2.4" stroke-linejoin="round" stroke-linecap="butt"/>
<polyline points="169.0,202.8 180.0,200.8 190.5,196.5 201.0,190.7 211.5,186.5 222.0,181.3 232.5,176.0 243.0,170.8 253.5,166.0 264.0,162.4 274.4,158.8 285.0,155.1 295.4,152.5 306.0,150.9 316.4,150.0 328.0,150.0" fill="none" stroke="#ffffff" stroke-width="2.4" stroke-linejoin="round" stroke-linecap="butt"/>
<polyline points="328.0,150.0 335.3,151.3 340.5,151.3" fill="none" stroke="#ff0000" stroke-width="2.4" stroke-linejoin="round" stroke-linecap="butt"/>
<polyline points="340.5,151.3 347.9,150.2" fill="none" stroke="#ffffff" stroke-width="2.4" stroke-linejoin="round" stroke-linecap="butt"/>
<polyline points="347.9,150.2 358.4,151.3 368.9,152.3 378.4,153.0 387.8,154.0 394.1,154.0" fill="none" stroke="#ff0000" stroke-width="2.4" stroke-linejoin="round" stroke-linecap="butt"/>
<polyline points="394.1,154.0 401.5,152.5 412.0,151.3 422.5,150.9 433.0,150.0 443.5,149.4 454.0,149.4 464.4,148.3 474.9,147.1 487.5,146.2 493.8,145.6" fill="none" stroke="#ffffff" stroke-width="2.4" stroke-linejoin="round" stroke-linecap="butt"/>
<polyline points="493.8,145.6 502.2,147.7 512.7,150.9 521.1,154.0 529.5,155.5 537.9,156.7 548.4,156.7 558.9,156.3" fill="none" stroke="#ff0000" stroke-width="2.4" stroke-linejoin="round" stroke-linecap="butt"/>
<polyline points="558.9,156.3 572.5,155.9 580.5,154.5 586.7,152.7 593.8,148.3 602.7,143.8 613.4,138.5 622.3,131.4 631.2,125.1 640.1,119.8 649.2,114.4 657.3,110.8 665.4,107.1 673.5,104.7 681.6,101.4 689.7,98.2 697.8,95.8 705.9,93.3 712.4,88.5 718.9,85.6 726.2,83.6" fill="none" stroke="#ffffff" stroke-width="2.4" stroke-linejoin="round" stroke-linecap="butt"/>
<polyline points="726.2,83.6 731.9,84.4 738.3,86.9 744.8,88.8 751.3,91.7 757.8,95.8 764.8,98.6" fill="none" stroke="#ff0000" stroke-width="2.4" stroke-linejoin="round" stroke-linecap="butt"/>
<polyline points="0.0,204.3 2.9,204.1" fill="none" stroke="#ffffff" stroke-width="2.4" stroke-linejoin="round" stroke-linecap="butt"/>
<polyline points="2.9,204.1 30.5,205.0 56.0,207.4 65.0,209.8 78.0,213.0 90.0,214.3 96.0,215.4 109.0,216.7" fill="none" stroke="#ff0000" stroke-width="2.4" stroke-linejoin="round" stroke-linecap="butt"/>
<polyline points="109.0,216.7 123.0,215.9" fill="none" stroke="#ffffff" stroke-width="2.4" stroke-linejoin="round" stroke-linecap="butt"/>
<polyline points="123.0,215.9 136.0,216.9" fill="none" stroke="#ff0000" stroke-width="2.4" stroke-linejoin="round" stroke-linecap="butt"/>
<polyline points="136.0,216.9 143.0,213.7 150.0,211.0 158.0,210.0 169.0,209.8" fill="none" stroke="#ffffff" stroke-width="2.4" stroke-linejoin="round" stroke-linecap="butt"/>
<polyline points="169.0,209.8 176.0,212.4 182.0,214.3 188.5,219.3 192.0,223.0" fill="none" stroke="#ff0000" stroke-width="2.4" stroke-linejoin="round" stroke-linecap="butt"/>
<polyline points="263.0,224.0 267.1,220.1 274.4,214.9 282.8,208.6 289.1,201.2 297.5,192.8 305.9,186.5 314.3,182.8 328.0,182.8" fill="none" stroke="#ffffff" stroke-width="2.4" stroke-linejoin="round" stroke-linecap="butt"/>
<polyline points="328.0,182.8 335.3,184.9" fill="none" stroke="#ff0000" stroke-width="2.4" stroke-linejoin="round" stroke-linecap="butt"/>
<polyline points="335.3,184.9 347.9,183.0" fill="none" stroke="#ffffff" stroke-width="2.4" stroke-linejoin="round" stroke-linecap="butt"/>
<polyline points="347.9,183.0 358.4,184.4 367.8,184.9" fill="none" stroke="#ff0000" stroke-width="2.4" stroke-linejoin="round" stroke-linecap="butt"/>
<polyline points="367.8,184.9 373.1,182.8 378.4,180.7 386.8,179.2 394.1,178.8" fill="none" stroke="#ffffff" stroke-width="2.4" stroke-linejoin="round" stroke-linecap="butt"/>
<polyline points="394.1,178.8 401.5,179.8" fill="none" stroke="#ff0000" stroke-width="2.4" stroke-linejoin="round" stroke-linecap="butt"/>
<polyline points="401.5,179.8 412.0,179.2 422.5,177.1 433.0,176.0 443.5,173.9 454.0,172.5 464.4,170.8 472.8,168.3 481.2,167.0" fill="none" stroke="#ffffff" stroke-width="2.4" stroke-linejoin="round" stroke-linecap="butt"/>
<polyline points="481.2,167.0 487.5,168.1" fill="none" stroke="#ff0000" stroke-width="2.4" stroke-linejoin="round" stroke-linecap="butt"/>
<polyline points="487.5,168.1 493.8,167.2" fill="none" stroke="#ffffff" stroke-width="2.4" stroke-linejoin="round" stroke-linecap="butt"/>
<polyline points="493.8,167.2 502.2,169.7 512.7,172.3 520.0,172.9" fill="none" stroke="#ff0000" stroke-width="2.4" stroke-linejoin="round" stroke-linecap="butt"/>
<polyline points="520.0,172.9 529.5,172.3 537.9,170.8 548.4,170.4 558.9,170.2 570.7,170.0 580.5,169.6" fill="none" stroke="#ffffff" stroke-width="2.4" stroke-linejoin="round" stroke-linecap="butt"/>
<polyline points="580.5,169.6 586.7,174.1 592.9,178.5 599.2,186.5 605.4,201.7 613.4,207.5 620.5,212.3 626.2,215.0" fill="none" stroke="#ff0000" stroke-width="2.4" stroke-linejoin="round" stroke-linecap="butt"/>
<polyline points="626.2,215.0 636.5,209.7 645.4,201.7 654.3,193.7 663.2,185.6 672.1,177.6 681.0,169.6 689.9,161.6 698.8,151.8 706.0,142.9 712.2,132.2 718.4,127.8 725.5,122.8" fill="none" stroke="#ffffff" stroke-width="2.4" stroke-linejoin="round" stroke-linecap="butt"/>
<polyline points="725.5,122.8 736.2,125.1 746.0,126.9" fill="none" stroke="#ff0000" stroke-width="2.4" stroke-linejoin="round" stroke-linecap="butt"/>
<polyline points="746.0,126.9 752.2,122.6" fill="none" stroke="#ffffff" stroke-width="2.4" stroke-linejoin="round" stroke-linecap="butt"/>
<polyline points="752.2,122.6 759.4,125.7 764.8,128.7" fill="none" stroke="#ff0000" stroke-width="2.4" stroke-linejoin="round" stroke-linecap="butt"/>
<polyline points="0.0,188.5 10.0,189.5 17.0,190.3 30.0,191.3 56.0,194.1 96.0,200.2 137.0,201.0 169.0,201.3 180.0,198.1 190.5,192.8 201.0,188.2 211.5,184.9 222.0,178.1 232.5,172.9 243.0,167.2 251.4,160.3 259.7,156.7 268.1,156.7 278.6,157.2 289.1,157.6 297.5,157.2 306.0,158.8 316.4,159.3 327.0,159.3 337.4,160.3 347.9,159.3 358.4,158.2 368.9,156.5 376.3,154.0 384.7,151.9 393.1,149.8 401.5,148.3 408.8,148.1 416.2,148.8 424.6,149.4 433.0,150.2 443.5,150.9 454.0,151.3 464.4,150.9 474.9,150.4 483.3,150.2 491.7,150.9 500.1,151.9 508.5,154.0 516.9,156.1 525.3,157.2 533.7,156.1 542.1,155.1 552.6,154.6 563.1,154.6 570.0,154.2 580.0,153.5 587.0,151.0 593.8,147.4 600.9,141.1 608.1,134.0 615.2,126.0 620.5,118.0 625.9,112.7 631.2,110.0 636.2,108.7 644.3,106.3 652.4,104.7 660.5,104.4 670.2,104.4 680.0,104.7 689.7,103.9 697.8,103.4 705.9,102.7 712.4,100.6 718.9,98.2 726.2,95.8 731.9,96.6 738.3,97.4 746.4,97.9 752.9,99.0 759.4,101.8 765.8,104.3" fill="none" stroke="#fff" stroke-width="1.3" stroke-linejoin="round"/>
<polygon points="772.5,23 778.2,28.6 778.2,35.1 766.9,35.1 766.9,28.6" fill="#b4b4b4"/>
<path d="M0,41 H225.7 V69.3 H252.4 V97.2 H335.9 V125 H486.8 V152.6 H412.8 V180.7 H190.2 V208.6 H0 Z" fill="#fff" fill-opacity="0.4"/>
<rect x="0" y="125" width="1450" height="1.2" fill="#b8b8b8"/>
<rect x="0" y="208" width="1450" height="1.2" fill="#b8b8b8"/>
<line x1="0.0" y1="163.2" x2="249.3" y2="217.6" stroke="#25b0b4" stroke-width="1.15" stroke-opacity="0.75"/>
<line x1="0.0" y1="216.0" x2="20.0" y2="220.4" stroke="#25b0b4" stroke-width="1.15" stroke-opacity="0.75" stroke-dasharray="6,5"/>
<line x1="249.3" y1="108.5" x2="693.5" y2="158.6" stroke="#25b0b4" stroke-width="1.15" stroke-opacity="0.75"/>
<line x1="249.3" y1="135.1" x2="692.6" y2="187.4" stroke="#25b0b4" stroke-width="1.15" stroke-opacity="0.75" stroke-dasharray="6,5"/>
<line x1="249.3" y1="166.6" x2="693.5" y2="217.7" stroke="#25b0b4" stroke-width="1.15" stroke-opacity="0.75"/>
<line x1="600.2" y1="28.8" x2="1057.5" y2="114.5" stroke="#25b0b4" stroke-width="1.15" stroke-opacity="0.75"/>
<line x1="600.2" y1="67.4" x2="1057.5" y2="152.4" stroke="#25b0b4" stroke-width="1.15" stroke-opacity="0.75" stroke-dasharray="6,5"/>
<line x1="600.2" y1="105.0" x2="1057.5" y2="190.5" stroke="#25b0b4" stroke-width="1.15" stroke-opacity="0.75"/>
<line x1="214.6" y1="164.1" x2="1122.7" y2="161.9" stroke="#008a00" stroke-width="2.2"/>
</g>
<g clip-path="url(#cp1)">
<rect x="1" y="324" width="5" height="6" fill="#e4dde4"/>
<rect x="2" y="325" width="3" height="4" fill="#ff0000"/>
<rect x="8" y="299" width="5" height="31" fill="#e4dde4"/>
<rect x="9" y="300" width="3" height="29" fill="#00ff00"/>
<rect x="15" y="303" width="5" height="27" fill="#e4dde4"/>
<rect x="16" y="304" width="3" height="25" fill="#ff0000"/>
<rect x="21" y="310" width="5" height="20" fill="#e4dde4"/>
<rect x="22" y="311" width="3" height="18" fill="#ff0000"/>
<rect x="28" y="310" width="5" height="20" fill="#e4dde4"/>
<rect x="29" y="311" width="3" height="18" fill="#ff0000"/>
<rect x="35" y="312" width="5" height="18" fill="#e4dde4"/>
<rect x="36" y="313" width="3" height="16" fill="#ff0000"/>
<rect x="41" y="327" width="5" height="3" fill="#e4dde4"/>
<rect x="42" y="328" width="3" height="1" fill="#ff0000"/>
<rect x="48" y="315" width="5" height="15" fill="#e4dde4"/>
<rect x="49" y="316" width="3" height="13" fill="#00ff00"/>
<rect x="54" y="322" width="5" height="8" fill="#e4dde4"/>
<rect x="55" y="323" width="3" height="6" fill="#ff0000"/>
<rect x="61" y="324" width="5" height="6" fill="#e4dde4"/>
<rect x="62" y="325" width="3" height="4" fill="#ff0000"/>
<rect x="68" y="321" width="5" height="9" fill="#e4dde4"/>
<rect x="69" y="322" width="3" height="7" fill="#00ff00"/>
<rect x="74" y="321" width="5" height="9" fill="#e4dde4"/>
<rect x="75" y="322" width="3" height="7" fill="#00ff00"/>
<rect x="81" y="326" width="5" height="4" fill="#e4dde4"/>
<rect x="82" y="327" width="3" height="2" fill="#ff0000"/>
<rect x="88" y="326" width="5" height="4" fill="#e4dde4"/>
<rect x="89" y="327" width="3" height="2" fill="#00ff00"/>
<rect x="94" y="326" width="5" height="4" fill="#e4dde4"/>
<rect x="95" y="327" width="3" height="2" fill="#00ff00"/>
<rect x="101" y="326" width="5" height="4" fill="#e4dde4"/>
<rect x="102" y="327" width="3" height="2" fill="#ff0000"/>
<rect x="107" y="326" width="5" height="4" fill="#e4dde4"/>
<rect x="108" y="327" width="3" height="2" fill="#00ff00"/>
<rect x="114" y="314" width="5" height="16" fill="#e4dde4"/>
<rect x="115" y="315" width="3" height="14" fill="#00ff00"/>
<rect x="121" y="324" width="5" height="6" fill="#e4dde4"/>
<rect x="122" y="325" width="3" height="4" fill="#ff0000"/>
<rect x="127" y="320" width="5" height="10" fill="#e4dde4"/>
<rect x="128" y="321" width="3" height="8" fill="#00ff00"/>
<rect x="134" y="326" width="5" height="4" fill="#e4dde4"/>
<rect x="135" y="327" width="3" height="2" fill="#ff0000"/>
<rect x="141" y="320" width="5" height="10" fill="#e4dde4"/>
<rect x="142" y="321" width="3" height="8" fill="#00ff00"/>
<rect x="147" y="322" width="5" height="8" fill="#e4dde4"/>
<rect x="148" y="323" width="3" height="6" fill="#ff0000"/>
<rect x="154" y="326" width="5" height="4" fill="#e4dde4"/>
<rect x="155" y="327" width="3" height="2" fill="#ff0000"/>
<rect x="160" y="326" width="5" height="4" fill="#e4dde4"/>
<rect x="161" y="327" width="3" height="2" fill="#00ff00"/>
<rect x="167" y="320" width="5" height="10" fill="#e4dde4"/>
<rect x="168" y="321" width="3" height="8" fill="#00ff00"/>
<rect x="174" y="313" width="5" height="17" fill="#e4dde4"/>
<rect x="175" y="314" width="3" height="15" fill="#00ff00"/>
<rect x="180" y="309" width="5" height="21" fill="#e4dde4"/>
<rect x="181" y="310" width="3" height="19" fill="#00ff00"/>
<rect x="187" y="279" width="5" height="51" fill="#e4dde4"/>
<rect x="188" y="280" width="3" height="49" fill="#00ff00"/>
<rect x="194" y="305" width="5" height="25" fill="#e4dde4"/>
<rect x="195" y="306" width="3" height="23" fill="#ff0000"/>
<rect x="200" y="281" width="5" height="49" fill="#e4dde4"/>
<rect x="201" y="282" width="3" height="47" fill="#00ff00"/>
<rect x="207" y="306" width="5" height="24" fill="#e4dde4"/>
<rect x="208" y="307" width="3" height="22" fill="#ff0000"/>
<rect x="213" y="311" width="5" height="19" fill="#e4dde4"/>
<rect x="214" y="312" width="3" height="17" fill="#ff0000"/>
<rect x="220" y="293" width="5" height="37" fill="#e4dde4"/>
<rect x="221" y="294" width="3" height="35" fill="#00ff00"/>
<rect x="227" y="279" width="5" height="51" fill="#e4dde4"/>
<rect x="228" y="280" width="3" height="49" fill="#00ff00"/>
<rect x="233" y="305" width="5" height="25" fill="#e4dde4"/>
<rect x="234" y="306" width="3" height="23" fill="#ff0000"/>
<rect x="240" y="264" width="5" height="66" fill="#e4dde4"/>
<rect x="241" y="265" width="3" height="64" fill="#00ff00"/>
<rect x="247" y="292" width="5" height="38" fill="#e4dde4"/>
<rect x="248" y="293" width="3" height="36" fill="#ff0000"/>
<rect x="253" y="306" width="5" height="24" fill="#e4dde4"/>
<rect x="254" y="307" width="3" height="22" fill="#ff0000"/>
<rect x="260" y="292" width="5" height="38" fill="#e4dde4"/>
<rect x="261" y="293" width="3" height="36" fill="#00ff00"/>
<rect x="266" y="297" width="5" height="33" fill="#e4dde4"/>
<rect x="267" y="298" width="3" height="31" fill="#ff0000"/>
<rect x="273" y="305" width="5" height="25" fill="#e4dde4"/>
<rect x="274" y="306" width="3" height="23" fill="#ff0000"/>
<rect x="280" y="319" width="5" height="11" fill="#e4dde4"/>
<rect x="281" y="320" width="3" height="9" fill="#ff0000"/>
<rect x="286" y="309" width="5" height="21" fill="#e4dde4"/>
<rect x="287" y="310" width="3" height="19" fill="#00ff00"/>
<rect x="293" y="316" width="5" height="14" fill="#e4dde4"/>
<rect x="294" y="317" width="3" height="12" fill="#ff0000"/>
<rect x="300" y="316" width="5" height="14" fill="#e4dde4"/>
<rect x="301" y="317" width="3" height="12" fill="#ff0000"/>
<rect x="306" y="316" width="5" height="14" fill="#e4dde4"/>
<rect x="307" y="317" width="3" height="12" fill="#ff0000"/>
<rect x="313" y="307" width="5" height="23" fill="#e4dde4"/>
<rect x="314" y="308" width="3" height="21" fill="#00ff00"/>
<rect x="319" y="319" width="5" height="11" fill="#e4dde4"/>
<rect x="320" y="320" width="3" height="9" fill="#ff0000"/>
<rect x="326" y="318" width="5" height="12" fill="#e4dde4"/>
<rect x="327" y="319" width="3" height="10" fill="#00ff00"/>
<rect x="333" y="311" width="5" height="19" fill="#e4dde4"/>
<rect x="334" y="312" width="3" height="17" fill="#00ff00"/>
<rect x="339" y="315" width="5" height="15" fill="#e4dde4"/>
<rect x="340" y="316" width="3" height="13" fill="#ff0000"/>
<rect x="346" y="315" width="5" height="15" fill="#e4dde4"/>
<rect x="347" y="316" width="3" height="13" fill="#ff0000"/>
<rect x="353" y="318" width="5" height="12" fill="#e4dde4"/>
<rect x="354" y="319" width="3" height="10" fill="#ff0000"/>
<rect x="359" y="326" width="5" height="4" fill="#e4dde4"/>
<rect x="360" y="327" width="3" height="2" fill="#ff0000"/>
<rect x="366" y="290" width="5" height="40" fill="#e4dde4"/>
<rect x="367" y="291" width="3" height="38" fill="#00ff00"/>
<rect x="372" y="292" width="5" height="38" fill="#e4dde4"/>
<rect x="373" y="293" width="3" height="36" fill="#ff0000"/>
<rect x="379" y="273" width="5" height="57" fill="#e4dde4"/>
<rect x="380" y="274" width="3" height="55" fill="#00ff00"/>
<rect x="386" y="294" width="5" height="36" fill="#e4dde4"/>
<rect x="387" y="295" width="3" height="34" fill="#ff0000"/>
<rect x="392" y="298" width="5" height="32" fill="#e4dde4"/>
<rect x="393" y="299" width="3" height="30" fill="#ff0000"/>
<rect x="399" y="296" width="5" height="34" fill="#e4dde4"/>
<rect x="400" y="297" width="3" height="32" fill="#00ff00"/>
<rect x="406" y="306" width="5" height="24" fill="#e4dde4"/>
<rect x="407" y="307" width="3" height="22" fill="#ff0000"/>
<rect x="412" y="319" width="5" height="11" fill="#e4dde4"/>
<rect x="413" y="320" width="3" height="9" fill="#ff0000"/>
<rect x="419" y="311" width="5" height="19" fill="#e4dde4"/>
<rect x="420" y="312" width="3" height="17" fill="#00ff00"/>
<rect x="425" y="318" width="5" height="12" fill="#e4dde4"/>
<rect x="426" y="319" width="3" height="10" fill="#ff0000"/>
<rect x="432" y="316" width="5" height="14" fill="#e4dde4"/>
<rect x="433" y="317" width="3" height="12" fill="#00ff00"/>
<rect x="439" y="319" width="5" height="11" fill="#e4dde4"/>
<rect x="440" y="320" width="3" height="9" fill="#ff0000"/>
<rect x="445" y="319" width="5" height="11" fill="#e4dde4"/>
<rect x="446" y="320" width="3" height="9" fill="#00ff00"/>
<rect x="452" y="318" width="5" height="12" fill="#e4dde4"/>
<rect x="453" y="319" width="3" height="10" fill="#00ff00"/>
<rect x="459" y="320" width="5" height="10" fill="#e4dde4"/>
<rect x="460" y="321" width="3" height="8" fill="#ff0000"/>
<rect x="465" y="304" width="5" height="26" fill="#e4dde4"/>
<rect x="466" y="305" width="3" height="24" fill="#00ff00"/>
<rect x="472" y="316" width="5" height="14" fill="#e4dde4"/>
<rect x="473" y="317" width="3" height="12" fill="#ff0000"/>
<rect x="479" y="319" width="5" height="11" fill="#e4dde4"/>
<rect x="480" y="320" width="3" height="9" fill="#ff0000"/>
<rect x="485" y="311" width="5" height="19" fill="#e4dde4"/>
<rect x="486" y="312" width="3" height="17" fill="#00ff00"/>
<rect x="492" y="322" width="5" height="8" fill="#e4dde4"/>
<rect x="493" y="323" width="3" height="6" fill="#ff0000"/>
<rect x="498" y="319" width="5" height="11" fill="#e4dde4"/>
<rect x="499" y="320" width="3" height="9" fill="#00ff00"/>
<rect x="505" y="320" width="5" height="10" fill="#e4dde4"/>
<rect x="506" y="321" width="3" height="8" fill="#ff0000"/>
<rect x="512" y="320" width="5" height="10" fill="#e4dde4"/>
<rect x="513" y="321" width="3" height="8" fill="#ff0000"/>
<rect x="518" y="322" width="5" height="8" fill="#e4dde4"/>
<rect x="519" y="323" width="3" height="6" fill="#ff0000"/>
<rect x="525" y="290" width="5" height="40" fill="#e4dde4"/>
<rect x="526" y="291" width="3" height="38" fill="#00ff00"/>
<rect x="532" y="316" width="5" height="14" fill="#e4dde4"/>
<rect x="533" y="317" width="3" height="12" fill="#ff0000"/>
<rect x="538" y="322" width="5" height="8" fill="#e4dde4"/>
<rect x="539" y="323" width="3" height="6" fill="#ff0000"/>
<rect x="545" y="326" width="5" height="4" fill="#e4dde4"/>
<rect x="546" y="327" width="3" height="2" fill="#ff0000"/>
<rect x="551" y="300" width="5" height="30" fill="#e4dde4"/>
<rect x="552" y="301" width="3" height="28" fill="#00ff00"/>
<rect x="558" y="318" width="5" height="12" fill="#e4dde4"/>
<rect x="559" y="319" width="3" height="10" fill="#ff0000"/>
<rect x="565" y="324" width="5" height="6" fill="#e4dde4"/>
<rect x="566" y="325" width="3" height="4" fill="#ff0000"/>
<rect x="571" y="320" width="5" height="10" fill="#e4dde4"/>
<rect x="572" y="321" width="3" height="8" fill="#00ff00"/>
<rect x="578" y="322" width="5" height="8" fill="#e4dde4"/>
<rect x="579" y="323" width="3" height="6" fill="#ff0000"/>
<rect x="585" y="288" width="5" height="42" fill="#e4dde4"/>
<rect x="586" y="289" width="3" height="40" fill="#00ff00"/>
<rect x="591" y="298" width="5" height="32" fill="#e4dde4"/>
<rect x="592" y="299" width="3" height="30" fill="#ff0000"/>
<rect x="598" y="259" width="5" height="71" fill="#e4dde4"/>
<rect x="599" y="260" width="3" height="69" fill="#00ff00"/>
<rect x="604" y="263" width="5" height="67" fill="#e4dde4"/>
<rect x="605" y="264" width="3" height="65" fill="#ff0000"/>
<rect x="611" y="258" width="5" height="72" fill="#e4dde4"/>
<rect x="612" y="259" width="3" height="70" fill="#00ff00"/>
<rect x="618" y="240" width="5" height="90" fill="#e4dde4"/>
<rect x="619" y="241" width="3" height="88" fill="#00ff00"/>
<rect x="624" y="280" width="5" height="50" fill="#e4dde4"/>
<rect x="625" y="281" width="3" height="48" fill="#ff0000"/>
<rect x="631" y="287" width="5" height="43" fill="#e4dde4"/>
<rect x="632" y="288" width="3" height="41" fill="#ff0000"/>
<rect x="638" y="254" width="5" height="76" fill="#e4dde4"/>
<rect x="639" y="255" width="3" height="74" fill="#00ff00"/>
<rect x="644" y="296" width="5" height="34" fill="#e4dde4"/>
<rect x="645" y="297" width="3" height="32" fill="#ff0000"/>
<rect x="651" y="309" width="5" height="21" fill="#e4dde4"/>
<rect x="652" y="310" width="3" height="19" fill="#ff0000"/>
<rect x="657" y="305" width="5" height="25" fill="#e4dde4"/>
<rect x="658" y="306" width="3" height="23" fill="#00ff00"/>
<rect x="664" y="318" width="5" height="12" fill="#e4dde4"/>
<rect x="665" y="319" width="3" height="10" fill="#ff0000"/>
<rect x="671" y="302" width="5" height="28" fill="#e4dde4"/>
<rect x="672" y="303" width="3" height="26" fill="#00ff00"/>
<rect x="677" y="314" width="5" height="16" fill="#e4dde4"/>
<rect x="678" y="315" width="3" height="14" fill="#ff0000"/>
<rect x="684" y="306" width="5" height="24" fill="#e4dde4"/>
<rect x="685" y="307" width="3" height="22" fill="#00ff00"/>
<rect x="691" y="312" width="5" height="18" fill="#e4dde4"/>
<rect x="692" y="313" width="3" height="16" fill="#ff0000"/>
<rect x="697" y="307" width="5" height="23" fill="#e4dde4"/>
<rect x="698" y="308" width="3" height="21" fill="#00ff00"/>
<rect x="704" y="317" width="5" height="13" fill="#e4dde4"/>
<rect x="705" y="318" width="3" height="11" fill="#ff0000"/>
<rect x="710" y="272" width="5" height="58" fill="#e4dde4"/>
<rect x="711" y="273" width="3" height="56" fill="#00ff00"/>
<rect x="717" y="298" width="5" height="32" fill="#e4dde4"/>
<rect x="718" y="299" width="3" height="30" fill="#ff0000"/>
<rect x="724" y="296" width="5" height="34" fill="#e4dde4"/>
<rect x="725" y="297" width="3" height="32" fill="#00ff00"/>
<rect x="730" y="271" width="5" height="59" fill="#e4dde4"/>
<rect x="731" y="272" width="3" height="57" fill="#00ff00"/>
<rect x="737" y="303" width="5" height="27" fill="#e4dde4"/>
<rect x="738" y="304" width="3" height="25" fill="#ff0000"/>
<rect x="744" y="304" width="5" height="26" fill="#e4dde4"/>
<rect x="745" y="305" width="3" height="24" fill="#ff0000"/>
<rect x="750" y="313" width="5" height="17" fill="#e4dde4"/>
<rect x="751" y="314" width="3" height="15" fill="#ff0000"/>
<rect x="757" y="283" width="5" height="47" fill="#e4dde4"/>
<rect x="758" y="284" width="3" height="45" fill="#00ff00"/>
<rect x="763" y="307" width="5" height="23" fill="#e4dde4"/>
<rect x="764" y="308" width="3" height="21" fill="#ff0000"/>
</g>
<g clip-path="url(#cp2)">
<rect x="2" y="439.7" width="3" height="5.3" fill="#20b0a6"/>
<rect x="9" y="435.8" width="3" height="9.2" fill="#20b0a6"/>
<rect x="16" y="435.8" width="3" height="9.2" fill="#20b0a6"/>
<rect x="22" y="438.5" width="3" height="6.5" fill="#20b0a6"/>
<rect x="29" y="441.9" width="3" height="3.1" fill="#20b0a6"/>
<rect x="36" y="444.0" width="3" height="1.0" fill="#20b0a6"/>
<rect x="49" y="445.0" width="3" height="0.7" fill="#00ff00"/>
<rect x="55" y="445.0" width="3" height="1.0" fill="#00ff00"/>
<rect x="62" y="445.0" width="3" height="1.7" fill="#00ff00"/>
<rect x="69" y="445.0" width="3" height="2.4" fill="#00ff00"/>
<rect x="75" y="445.0" width="3" height="3.1" fill="#00ff00"/>
<rect x="82" y="445.0" width="3" height="3.6" fill="#00ff00"/>
<rect x="89" y="445.0" width="3" height="2.9" fill="#00ff00"/>
<rect x="95" y="445.0" width="3" height="1.7" fill="#00ff00"/>
<rect x="102" y="445.0" width="3" height="0.7" fill="#00ff00"/>
<rect x="108" y="444.5" width="3" height="0.5" fill="#20b0a6"/>
<rect x="115" y="441.9" width="3" height="3.1" fill="#20b0a6"/>
<rect x="122" y="440.9" width="3" height="4.1" fill="#20b0a6"/>
<rect x="128" y="440.9" width="3" height="4.1" fill="#20b0a6"/>
<rect x="135" y="441.9" width="3" height="3.1" fill="#20b0a6"/>
<rect x="142" y="441.9" width="3" height="3.1" fill="#20b0a6"/>
<rect x="148" y="441.9" width="3" height="3.1" fill="#20b0a6"/>
<rect x="155" y="441.4" width="3" height="3.6" fill="#20b0a6"/>
<rect x="161" y="440.9" width="3" height="4.1" fill="#20b0a6"/>
<rect x="168" y="439.4" width="3" height="5.6" fill="#20b0a6"/>
<rect x="175" y="437.0" width="3" height="8.0" fill="#20b0a6"/>
<rect x="181" y="434.9" width="3" height="10.1" fill="#20b0a6"/>
<rect x="188" y="429.3" width="3" height="15.7" fill="#20b0a6"/>
<rect x="195" y="425.7" width="3" height="19.3" fill="#20b0a6"/>
<rect x="201" y="422.8" width="3" height="22.2" fill="#20b0a6"/>
<rect x="208" y="424.9" width="3" height="20.1" fill="#20b0a6"/>
<rect x="214" y="424.5" width="3" height="20.5" fill="#20b0a6"/>
<rect x="221" y="423.3" width="3" height="21.7" fill="#20b0a6"/>
<rect x="228" y="424.9" width="3" height="20.1" fill="#20b0a6"/>
<rect x="234" y="427.4" width="3" height="17.6" fill="#20b0a6"/>
<rect x="241" y="423.3" width="3" height="21.7" fill="#20b0a6"/>
<rect x="248" y="422.0" width="3" height="23.0" fill="#20b0a6"/>
<rect x="254" y="424.0" width="3" height="21.0" fill="#20b0a6"/>
<rect x="261" y="430.0" width="3" height="15.0" fill="#20b0a6"/>
<rect x="267" y="439.7" width="3" height="5.3" fill="#20b0a6"/>
<rect x="274" y="445.0" width="3" height="2.4" fill="#00ff00"/>
<rect x="281" y="445.0" width="3" height="7.2" fill="#00ff00"/>
<rect x="287" y="445.0" width="3" height="9.2" fill="#00ff00"/>
<rect x="294" y="445.0" width="3" height="11.6" fill="#00ff00"/>
<rect x="301" y="445.0" width="3" height="13.5" fill="#00ff00"/>
<rect x="307" y="445.0" width="3" height="15.5" fill="#00ff00"/>
<rect x="314" y="445.0" width="3" height="15.7" fill="#00ff00"/>
<rect x="320" y="445.0" width="3" height="12.6" fill="#00ff00"/>
<rect x="327" y="445.0" width="3" height="12.6" fill="#00ff00"/>
<rect x="334" y="445.0" width="3" height="12.6" fill="#00ff00"/>
<rect x="340" y="445.0" width="3" height="9.7" fill="#00ff00"/>
<rect x="347" y="445.0" width="3" height="7.2" fill="#00ff00"/>
<rect x="354" y="445.0" width="3" height="5.6" fill="#00ff00"/>
<rect x="360" y="445.0" width="3" height="6.0" fill="#00ff00"/>
<rect x="367" y="445.0" width="3" height="0.5" fill="#00ff00"/>
<rect x="380" y="439.0" width="3" height="6.0" fill="#20b0a6"/>
<rect x="387" y="435.8" width="3" height="9.2" fill="#20b0a6"/>
<rect x="393" y="435.8" width="3" height="9.2" fill="#20b0a6"/>
<rect x="400" y="437.0" width="3" height="8.0" fill="#20b0a6"/>
<rect x="407" y="440.2" width="3" height="4.8" fill="#20b0a6"/>
<rect x="413" y="443.1" width="3" height="1.9" fill="#20b0a6"/>
<rect x="420" y="445.0" width="3" height="0.5" fill="#00ff00"/>
<rect x="426" y="445.0" width="3" height="2.4" fill="#00ff00"/>
<rect x="433" y="445.0" width="3" height="5.6" fill="#00ff00"/>
<rect x="440" y="445.0" width="3" height="7.2" fill="#00ff00"/>
<rect x="446" y="445.0" width="3" height="9.2" fill="#00ff00"/>
<rect x="453" y="445.0" width="3" height="8.5" fill="#00ff00"/>
<rect x="460" y="445.0" width="3" height="8.5" fill="#00ff00"/>
<rect x="466" y="445.0" width="3" height="4.3" fill="#00ff00"/>
<rect x="473" y="445.0" width="3" height="1.2" fill="#00ff00"/>
<rect x="480" y="445.0" width="3" height="1.2" fill="#00ff00"/>
<rect x="486" y="445.0" width="3" height="3.1" fill="#00ff00"/>
<rect x="493" y="445.0" width="3" height="3.6" fill="#00ff00"/>
<rect x="499" y="445.0" width="3" height="4.3" fill="#00ff00"/>
<rect x="506" y="445.0" width="3" height="6.0" fill="#00ff00"/>
<rect x="513" y="445.0" width="3" height="7.2" fill="#00ff00"/>
<rect x="519" y="445.0" width="3" height="8.5" fill="#00ff00"/>
<rect x="526" y="445.0" width="3" height="6.0" fill="#00ff00"/>
<rect x="533" y="445.0" width="3" height="3.6" fill="#00ff00"/>
<rect x="539" y="445.0" width="3" height="1.9" fill="#00ff00"/>
<rect x="546" y="445.0" width="3" height="0.5" fill="#00ff00"/>
<rect x="552" y="444.3" width="3" height="0.7" fill="#20b0a6"/>
<rect x="559" y="443.1" width="3" height="1.9" fill="#20b0a6"/>
<rect x="566" y="442.1" width="3" height="2.9" fill="#20b0a6"/>
<rect x="572" y="441.4" width="3" height="3.6" fill="#20b0a6"/>
<rect x="579" y="440.9" width="3" height="4.1" fill="#20b0a6"/>
<rect x="586" y="435.3" width="3" height="9.7" fill="#20b0a6"/>
<rect x="592" y="429.3" width="3" height="15.7" fill="#20b0a6"/>
<rect x="599" y="420.1" width="3" height="24.9" fill="#20b0a6"/>
<rect x="605" y="408.0" width="3" height="37.0" fill="#20b0a6"/>
<rect x="612" y="405.9" width="3" height="39.1" fill="#20b0a6"/>
<rect x="619" y="402.2" width="3" height="42.8" fill="#20b0a6"/>
<rect x="625" y="403.9" width="3" height="41.1" fill="#20b0a6"/>
<rect x="632" y="414.1" width="3" height="30.9" fill="#20b0a6"/>
<rect x="639" y="424.0" width="3" height="21.0" fill="#20b0a6"/>
<rect x="645" y="432.9" width="3" height="12.1" fill="#20b0a6"/>
<rect x="652" y="439.7" width="3" height="5.3" fill="#20b0a6"/>
<rect x="658" y="445.0" width="3" height="1.7" fill="#00ff00"/>
<rect x="665" y="445.0" width="3" height="7.7" fill="#00ff00"/>
<rect x="672" y="445.0" width="3" height="11.6" fill="#00ff00"/>
<rect x="678" y="445.0" width="3" height="14.5" fill="#00ff00"/>
<rect x="685" y="445.0" width="3" height="14.5" fill="#00ff00"/>
<rect x="692" y="445.0" width="3" height="12.6" fill="#00ff00"/>
<rect x="698" y="445.0" width="3" height="13.3" fill="#00ff00"/>
<rect x="705" y="445.0" width="3" height="12.6" fill="#00ff00"/>
<rect x="711" y="445.0" width="3" height="5.6" fill="#00ff00"/>
<rect x="718" y="445.0" width="3" height="2.4" fill="#00ff00"/>
<rect x="725" y="444.5" width="3" height="0.5" fill="#20b0a6"/>
<rect x="731" y="445.0" width="3" height="4.3" fill="#00ff00"/>
<rect x="738" y="445.0" width="3" height="8.5" fill="#00ff00"/>
<rect x="745" y="445.0" width="3" height="10.4" fill="#00ff00"/>
<rect x="751" y="445.0" width="3" height="12.6" fill="#00ff00"/>
<rect x="758" y="445.0" width="3" height="18.6" fill="#00ff00"/>
<rect x="764" y="445.0" width="3" height="20.5" fill="#00ff00"/>
<polygon points="0.0,459.7 1.0,458.9 2.0,458.0 3.0,457.2 4.0,456.3 5.0,455.5 6.0,454.6 7.0,453.8 8.0,453.3 9.0,452.9 10.0,452.5 11.0,452.1 12.0,451.7 13.0,451.3 14.0,450.9 15.0,450.5 16.0,450.1 17.0,449.7 18.0,449.7 19.0,450.0 20.0,450.3 21.0,450.6 22.0,450.9 23.0,451.3 24.0,451.6 25.0,451.9 26.0,452.2 27.0,452.5 28.0,452.6 29.0,452.8 30.0,453.0 31.0,453.2 32.0,453.4 33.0,453.5 34.0,453.7 35.0,453.9 36.0,454.1 37.0,454.3 38.0,454.6 39.0,454.8 40.0,455.1 41.0,455.3 42.0,455.6 43.0,455.8 44.0,456.1 45.0,456.4 46.0,456.6 46.0,456.6 45.0,456.5 44.0,456.4 43.0,456.3 42.0,456.2 41.0,456.1 40.0,456.0 39.0,455.9 38.0,455.8 37.0,455.7 36.0,455.6 35.0,455.6 34.0,455.7 33.0,455.7 32.0,455.7 31.0,455.8 30.0,455.8 29.0,455.8 28.0,455.9 27.0,455.9 26.0,455.9 25.0,456.0 24.0,456.1 23.0,456.4 22.0,456.7 21.0,457.0 20.0,457.3 19.0,457.6 18.0,457.9 17.0,458.2 16.0,458.5 15.0,458.8 14.0,459.1 13.0,459.4 12.0,459.7 11.0,460.1 10.0,460.4 9.0,460.8 8.0,461.1 7.0,461.4 6.0,461.8 5.0,462.1 4.0,462.4 3.0,462.8 2.0,463.1 1.0,463.5 0.0,463.8" fill="#20b2aa" fill-opacity="0.44"/>
<polygon points="46.0,456.6 46.0,456.6 47.0,456.9 48.0,457.1 49.0,457.3 50.0,457.6 51.0,457.8 52.0,458.0 53.0,458.2 54.0,458.4 55.0,458.6 56.0,458.8 57.0,459.0 58.0,459.2 59.0,459.4 60.0,459.6 61.0,459.8 62.0,460.0 63.0,460.2 64.0,460.4 65.0,460.6 66.0,460.8 67.0,461.0 68.0,461.2 69.0,461.4 70.0,461.6 71.0,461.8 72.0,462.0 73.0,462.2 74.0,462.4 75.0,462.5 76.0,462.7 77.0,462.9 78.0,463.1 79.0,463.2 80.0,463.4 81.0,463.6 82.0,463.8 83.0,463.9 84.0,463.9 85.0,463.8 86.0,463.7 87.0,463.6 88.0,463.6 89.0,463.5 90.0,463.4 91.0,463.4 92.0,463.6 93.0,463.8 94.0,464.0 95.0,464.2 96.0,464.4 97.0,464.4 98.0,464.2 99.0,463.9 100.0,463.7 101.0,463.4 102.0,463.2 103.0,462.9 104.0,462.7 105.0,462.4 106.0,462.2 107.0,461.9 107.0,461.9 106.0,462.1 105.0,462.1 104.0,462.1 103.0,462.1 102.0,462.1 101.0,462.1 100.0,462.1 99.0,462.1 98.0,462.1 97.0,462.1 96.0,462.0 95.0,461.9 94.0,461.8 93.0,461.7 92.0,461.6 91.0,461.5 90.0,461.4 89.0,461.3 88.0,461.2 87.0,461.1 86.0,461.0 85.0,460.9 84.0,460.8 83.0,460.7 82.0,460.6 81.0,460.5 80.0,460.4 79.0,460.3 78.0,460.2 77.0,460.1 76.0,460.0 75.0,459.9 74.0,459.8 73.0,459.7 72.0,459.7 71.0,459.6 70.0,459.5 69.0,459.4 68.0,459.3 67.0,459.2 66.0,459.1 65.0,459.0 64.0,458.9 63.0,458.8 62.0,458.7 61.0,458.6 60.0,458.4 59.0,458.3 58.0,458.2 57.0,458.0 56.0,457.9 55.0,457.7 54.0,457.6 53.0,457.5 52.0,457.3 51.0,457.2 50.0,457.0 49.0,456.9 48.0,456.8 47.0,456.7 46.0,456.6 46.0,456.6" fill="#cccccc" fill-opacity="0.6"/>
<polygon points="107.0,461.9 107.0,461.8 108.0,461.5 109.0,461.1 110.0,460.7 111.0,460.4 112.0,460.0 113.0,459.6 114.0,459.2 115.0,458.9 116.0,458.5 117.0,458.4 118.0,458.2 119.0,458.1 120.0,458.0 121.0,457.8 122.0,457.7 123.0,457.6 124.0,457.4 125.0,457.3 126.0,457.2 127.0,457.0 128.0,456.9 129.0,456.8 130.0,456.7 131.0,456.5 132.0,456.4 133.0,456.3 134.0,456.2 135.0,456.0 136.0,455.9 137.0,455.8 138.0,455.7 139.0,455.5 140.0,455.4 141.0,455.3 142.0,455.2 143.0,455.0 144.0,454.9 145.0,454.8 146.0,454.7 147.0,454.6 148.0,454.5 149.0,454.4 150.0,454.3 151.0,454.2 152.0,454.1 153.0,454.0 154.0,453.9 155.0,453.8 156.0,453.7 157.0,453.6 158.0,453.3 159.0,453.0 160.0,452.7 161.0,452.4 162.0,452.1 163.0,451.8 164.0,451.5 165.0,451.2 166.0,451.0 167.0,450.7 168.0,450.4 169.0,450.1 170.0,449.5 171.0,448.9 172.0,448.2 173.0,447.6 174.0,447.0 175.0,446.4 176.0,445.8 177.0,445.1 178.0,444.5 179.0,443.8 180.0,442.7 181.0,441.5 182.0,440.4 183.0,439.3 184.0,438.2 185.0,437.0 186.0,435.9 187.0,434.8 188.0,433.7 189.0,432.5 190.0,431.3 191.0,430.1 192.0,429.0 193.0,427.8 194.0,426.6 195.0,425.4 196.0,424.3 197.0,423.1 198.0,422.0 199.0,420.8 200.0,419.7 201.0,418.5 202.0,417.4 203.0,416.2 204.0,415.8 205.0,415.3 206.0,414.9 207.0,414.4 208.0,414.0 209.0,413.5 210.0,413.1 211.0,412.6 212.0,412.2 213.0,411.7 214.0,411.3 215.0,410.8 216.0,409.8 217.0,408.7 218.0,407.6 219.0,406.5 220.0,405.4 221.0,404.3 222.0,403.2 223.0,402.5 224.0,402.0 225.0,401.4 226.0,400.9 227.0,400.3 228.0,399.8 229.0,399.2 230.0,398.7 231.0,398.2 232.0,397.6 233.0,397.1 234.0,396.5 235.0,395.7 236.0,394.6 237.0,393.5 238.0,392.5 239.0,391.4 240.0,390.4 241.0,389.3 242.0,388.2 243.0,387.2 244.0,386.1 245.0,385.2 246.0,384.2 247.0,383.3 248.0,382.4 249.0,381.4 250.0,380.5 251.0,379.7 252.0,379.0 253.0,378.2 254.0,377.5 255.0,376.7 256.0,376.8 257.0,377.2 258.0,377.7 259.0,378.1 260.0,378.5 261.0,378.9 262.0,379.4 263.0,380.7 264.0,382.1 265.0,383.5 266.0,384.9 267.0,386.3 268.0,387.8 269.0,389.2 270.0,390.5 271.0,391.7 272.0,392.5 272.0,392.5 271.0,392.0 270.0,392.0 269.0,392.0 268.0,392.0 267.0,392.0 266.0,392.0 265.0,392.0 264.0,392.2 263.0,392.5 262.0,392.8 261.0,393.2 260.0,393.5 259.0,393.8 258.0,394.1 257.0,394.6 256.0,395.6 255.0,396.6 254.0,397.6 253.0,398.5 252.0,399.5 251.0,400.5 250.0,401.5 249.0,402.6 248.0,403.6 247.0,404.7 246.0,405.7 245.0,406.8 244.0,407.8 243.0,408.5 242.0,409.3 241.0,410.0 240.0,410.8 239.0,411.5 238.0,412.3 237.0,413.0 236.0,413.8 235.0,414.5 234.0,415.3 233.0,416.0 232.0,416.7 231.0,417.4 230.0,418.1 229.0,418.7 228.0,419.4 227.0,420.1 226.0,420.8 225.0,421.5 224.0,422.2 223.0,422.9 222.0,423.6 221.0,424.3 220.0,424.9 219.0,425.6 218.0,426.3 217.0,426.9 216.0,427.6 215.0,428.3 214.0,428.9 213.0,429.5 212.0,430.1 211.0,430.7 210.0,431.3 209.0,431.9 208.0,432.5 207.0,433.1 206.0,433.7 205.0,434.3 204.0,434.9 203.0,435.5 202.0,436.2 201.0,436.8 200.0,437.5 199.0,438.1 198.0,438.8 197.0,439.4 196.0,440.1 195.0,440.7 194.0,441.3 193.0,441.9 192.0,442.6 191.0,443.2 190.0,443.8 189.0,444.4 188.0,445.0 187.0,445.5 186.0,446.1 185.0,446.6 184.0,447.2 183.0,447.7 182.0,448.3 181.0,448.8 180.0,449.3 179.0,449.9 178.0,450.3 177.0,450.7 176.0,451.1 175.0,451.4 174.0,451.8 173.0,452.2 172.0,452.6 171.0,452.9 170.0,453.3 169.0,453.6 168.0,453.8 167.0,454.0 166.0,454.2 165.0,454.4 164.0,454.6 163.0,454.8 162.0,455.0 161.0,455.2 160.0,455.4 159.0,455.6 158.0,455.8 157.0,456.0 156.0,456.1 155.0,456.2 154.0,456.3 153.0,456.4 152.0,456.5 151.0,456.6 150.0,456.7 149.0,456.8 148.0,456.9 147.0,457.0 146.0,457.1 145.0,457.2 144.0,457.3 143.0,457.5 142.0,457.6 141.0,457.7 140.0,457.9 139.0,458.0 138.0,458.1 137.0,458.3 136.0,458.4 135.0,458.5 134.0,458.7 133.0,458.8 132.0,458.9 131.0,459.0 130.0,459.2 129.0,459.3 128.0,459.4 127.0,459.5 126.0,459.7 125.0,459.8 124.0,459.9 123.0,460.0 122.0,460.2 121.0,460.3 120.0,460.4 119.0,460.5 118.0,460.7 117.0,460.8 116.0,460.9 115.0,461.0 114.0,461.1 113.0,461.3 112.0,461.4 111.0,461.5 110.0,461.6 109.0,461.8 108.0,461.9 107.0,462.0 107.0,461.9" fill="#20b2aa" fill-opacity="0.44"/>
<polygon points="272.0,392.5 272.0,393.0 273.0,394.2 274.0,395.5 275.0,396.7 276.0,398.0 277.0,399.2 278.0,400.5 279.0,401.7 280.0,402.6 281.0,403.4 282.0,404.3 283.0,405.2 284.0,406.0 285.0,406.9 286.0,407.8 287.0,408.6 288.0,409.5 289.0,410.3 290.0,411.1 291.0,411.8 292.0,412.6 293.0,413.4 294.0,414.1 295.0,414.9 296.0,415.7 297.0,416.4 298.0,417.2 299.0,418.0 300.0,418.9 301.0,419.7 302.0,420.6 303.0,421.5 304.0,422.3 305.0,423.2 306.0,424.1 307.0,424.9 308.0,425.8 309.0,426.3 310.0,426.8 311.0,427.3 312.0,427.9 313.0,428.4 314.0,428.9 315.0,429.4 316.0,429.5 317.0,429.5 318.0,429.5 319.0,429.5 320.0,429.5 321.0,429.5 322.0,429.8 323.0,430.1 324.0,430.5 325.0,430.9 326.0,431.2 327.0,431.6 328.0,432.0 329.0,432.3 330.0,432.7 331.0,433.2 332.0,433.7 333.0,434.1 334.0,434.6 335.0,435.1 336.0,435.5 337.0,436.0 338.0,436.0 339.0,436.1 340.0,436.1 341.0,436.2 342.0,436.2 343.0,436.3 344.0,436.3 345.0,436.4 346.0,436.4 347.0,436.5 348.0,436.5 349.0,436.4 350.0,436.2 351.0,436.1 352.0,436.0 353.0,435.8 354.0,435.7 355.0,435.6 356.0,435.6 357.0,435.8 358.0,435.9 359.0,436.1 360.0,436.3 361.0,436.5 362.0,436.0 363.0,435.3 364.0,434.7 365.0,434.1 366.0,433.4 367.0,432.8 368.0,432.2 369.0,431.8 370.0,431.7 371.0,431.6 372.0,431.5 373.0,431.4 374.0,431.3 375.0,431.2 376.0,430.9 376.0,430.9 375.0,431.2 374.0,431.3 373.0,431.4 372.0,431.5 371.0,431.6 370.0,431.7 369.0,431.8 368.0,431.8 367.0,431.7 366.0,431.5 365.0,431.3 364.0,431.2 363.0,431.0 362.0,430.8 361.0,430.7 360.0,430.5 359.0,430.2 358.0,430.0 357.0,429.8 356.0,429.6 355.0,429.4 354.0,429.2 353.0,429.0 352.0,428.8 351.0,428.6 350.0,428.3 349.0,428.0 348.0,427.7 347.0,427.4 346.0,427.1 345.0,426.8 344.0,426.5 343.0,426.2 342.0,425.9 341.0,425.4 340.0,425.0 339.0,424.5 338.0,424.1 337.0,423.6 336.0,423.2 335.0,422.8 334.0,422.3 333.0,421.9 332.0,421.4 331.0,421.0 330.0,420.5 329.0,420.1 328.0,419.7 327.0,419.2 326.0,418.8 325.0,418.3 324.0,417.9 323.0,417.5 322.0,417.0 321.0,416.6 320.0,416.1 319.0,415.4 318.0,414.6 317.0,413.9 316.0,413.1 315.0,412.4 314.0,411.6 313.0,410.9 312.0,410.1 311.0,409.4 310.0,408.7 309.0,408.0 308.0,407.4 307.0,406.8 306.0,406.2 305.0,405.6 304.0,404.9 303.0,404.3 302.0,403.7 301.0,403.1 300.0,402.5 299.0,402.0 298.0,401.5 297.0,401.0 296.0,400.5 295.0,400.0 294.0,399.5 293.0,399.0 292.0,398.5 291.0,398.0 290.0,397.6 289.0,397.2 288.0,396.8 287.0,396.5 286.0,396.1 285.0,395.7 284.0,395.4 283.0,395.0 282.0,394.6 281.0,394.3 280.0,394.1 279.0,393.8 278.0,393.6 277.0,393.3 276.0,393.1 275.0,392.8 274.0,392.6 273.0,392.3 272.0,392.1 272.0,392.5" fill="#cccccc" fill-opacity="0.6"/>
<polygon points="376.0,430.9 376.0,430.8 377.0,429.7 378.0,428.6 379.0,427.5 380.0,426.4 381.0,425.4 382.0,424.4 383.0,423.5 384.0,422.7 385.0,421.9 386.0,421.1 387.0,420.2 388.0,419.4 389.0,418.6 390.0,418.4 391.0,418.3 392.0,418.1 393.0,418.0 394.0,417.8 395.0,417.6 396.0,417.5 397.0,417.3 398.0,417.2 399.0,417.0 400.0,416.8 401.0,416.7 402.0,416.7 403.0,417.0 404.0,417.2 405.0,417.5 406.0,417.7 407.0,418.0 408.0,418.2 409.0,418.5 410.0,418.8 411.0,419.2 412.0,419.5 413.0,419.9 414.0,420.3 415.0,420.6 416.0,421.0 417.0,421.4 418.0,421.8 419.0,422.1 420.0,422.5 420.0,422.5 419.0,422.2 418.0,422.2 417.0,422.2 416.0,422.2 415.0,422.2 414.0,422.2 413.0,422.2 412.0,422.2 411.0,422.2 410.0,422.2 409.0,422.2 408.0,422.3 407.0,422.4 406.0,422.5 405.0,422.6 404.0,422.7 403.0,422.8 402.0,422.9 401.0,423.1 400.0,423.4 399.0,423.7 398.0,424.0 397.0,424.4 396.0,424.7 395.0,425.0 394.0,425.4 393.0,425.7 392.0,426.0 391.0,426.3 390.0,426.7 389.0,427.0 388.0,427.3 387.0,427.7 386.0,428.0 385.0,428.4 384.0,428.7 383.0,429.1 382.0,429.4 381.0,429.7 380.0,430.0 379.0,430.2 378.0,430.5 377.0,430.8 376.0,431.0 376.0,430.9" fill="#20b2aa" fill-opacity="0.44"/>
<polygon points="420.0,422.5 420.0,422.7 421.0,423.3 422.0,423.9 423.0,424.6 424.0,425.2 425.0,425.8 426.0,426.4 427.0,427.1 428.0,427.7 429.0,428.3 430.0,429.0 431.0,429.6 432.0,430.2 433.0,430.8 434.0,431.5 435.0,432.1 436.0,432.7 437.0,433.4 438.0,434.0 439.0,434.6 440.0,435.2 441.0,435.8 442.0,436.5 443.0,437.1 444.0,437.7 445.0,438.3 446.0,438.9 447.0,439.6 448.0,440.2 449.0,440.4 450.0,440.6 451.0,440.8 452.0,440.9 453.0,441.1 454.0,441.3 455.0,441.4 456.0,441.7 457.0,441.9 458.0,442.2 459.0,442.4 460.0,442.7 461.0,443.0 462.0,443.2 463.0,442.9 464.0,442.6 465.0,442.3 466.0,442.0 467.0,441.7 468.0,441.3 469.0,440.9 470.0,440.5 471.0,440.1 472.0,439.7 473.0,439.3 474.0,438.9 475.0,438.6 476.0,438.8 477.0,438.9 478.0,439.1 479.0,439.2 480.0,439.3 481.0,439.5 482.0,439.6 483.0,440.1 484.0,440.6 485.0,441.1 486.0,441.7 487.0,442.2 488.0,442.7 489.0,442.8 490.0,443.0 491.0,443.1 492.0,443.2 493.0,443.4 494.0,443.5 495.0,443.9 496.0,444.3 497.0,444.7 498.0,445.1 499.0,445.5 500.0,445.9 501.0,446.3 502.0,446.8 503.0,447.4 504.0,447.9 505.0,448.5 506.0,449.1 507.0,449.7 508.0,450.2 509.0,450.8 510.0,451.3 511.0,451.8 512.0,452.2 513.0,452.7 514.0,453.1 515.0,453.6 516.0,454.0 517.0,454.4 518.0,454.9 519.0,455.3 520.0,455.8 521.0,455.9 522.0,455.6 523.0,455.3 524.0,455.1 525.0,454.8 526.0,454.5 527.0,454.3 528.0,454.0 529.0,453.7 530.0,453.5 531.0,453.2 532.0,453.0 533.0,452.9 534.0,452.8 535.0,452.7 536.0,452.6 537.0,452.5 538.0,452.4 539.0,452.3 540.0,452.2 541.0,452.1 542.0,452.0 543.0,451.9 544.0,451.8 545.0,451.6 546.0,451.4 547.0,451.2 548.0,451.1 548.0,451.1 547.0,451.1 546.0,451.1 545.0,451.1 544.0,451.0 543.0,451.0 542.0,450.9 541.0,450.9 540.0,450.9 539.0,450.8 538.0,450.8 537.0,450.7 536.0,450.7 535.0,450.6 534.0,450.5 533.0,450.5 532.0,450.4 531.0,450.3 530.0,450.2 529.0,450.2 528.0,450.1 527.0,450.0 526.0,449.8 525.0,449.4 524.0,449.0 523.0,448.6 522.0,448.2 521.0,447.8 520.0,447.4 519.0,447.1 518.0,446.7 517.0,446.4 516.0,446.1 515.0,445.7 514.0,445.4 513.0,445.0 512.0,444.7 511.0,444.3 510.0,444.0 509.0,443.6 508.0,443.2 507.0,442.7 506.0,442.3 505.0,441.9 504.0,441.5 503.0,441.0 502.0,440.6 501.0,440.2 500.0,440.0 499.0,439.8 498.0,439.5 497.0,439.3 496.0,439.0 495.0,438.8 494.0,438.6 493.0,438.4 492.0,438.2 491.0,438.0 490.0,437.8 489.0,437.6 488.0,437.4 487.0,437.3 486.0,437.2 485.0,437.0 484.0,436.9 483.0,436.8 482.0,436.7 481.0,436.7 480.0,436.7 479.0,436.7 478.0,436.7 477.0,436.7 476.0,436.7 475.0,436.7 474.0,436.6 473.0,436.4 472.0,436.2 471.0,436.1 470.0,435.9 469.0,435.8 468.0,435.6 467.0,435.4 466.0,435.2 465.0,435.0 464.0,434.8 463.0,434.6 462.0,434.4 461.0,434.2 460.0,434.0 459.0,433.8 458.0,433.6 457.0,433.4 456.0,433.2 455.0,432.9 454.0,432.5 453.0,432.1 452.0,431.7 451.0,431.3 450.0,430.9 449.0,430.5 448.0,430.1 447.0,429.7 446.0,429.3 445.0,428.9 444.0,428.5 443.0,428.1 442.0,427.6 441.0,427.2 440.0,426.8 439.0,426.4 438.0,425.9 437.0,425.5 436.0,425.1 435.0,424.6 434.0,424.5 433.0,424.4 432.0,424.3 431.0,424.2 430.0,424.0 429.0,423.9 428.0,423.8 427.0,423.6 426.0,423.4 425.0,423.2 424.0,423.0 423.0,422.9 422.0,422.7 421.0,422.5 420.0,422.3 420.0,422.5" fill="#cccccc" fill-opacity="0.6"/>
<polygon points="548.0,451.1 548.0,451.0 549.0,450.8 550.0,450.6 551.0,450.4 552.0,450.2 553.0,450.0 554.0,449.8 555.0,449.6 556.0,449.4 557.0,449.1 558.0,448.9 559.0,448.6 560.0,448.3 561.0,448.1 562.0,447.8 563.0,447.5 564.0,447.3 565.0,447.0 566.0,446.7 567.0,446.5 568.0,446.2 569.0,446.0 570.0,445.9 571.0,445.7 572.0,445.5 573.0,445.3 574.0,445.1 575.0,445.0 576.0,444.8 577.0,444.6 578.0,444.4 579.0,444.2 580.0,444.1 581.0,443.8 582.0,442.4 583.0,441.1 584.0,439.8 585.0,438.4 586.0,437.1 587.0,435.8 588.0,434.2 589.0,432.5 590.0,430.8 591.0,429.1 592.0,427.5 593.0,425.8 594.0,423.8 595.0,421.1 596.0,418.5 597.0,415.8 598.0,413.2 599.0,410.5 600.0,407.8 601.0,405.1 602.0,402.3 603.0,399.5 604.0,396.8 605.0,394.0 606.0,391.2 607.0,388.4 608.0,386.8 609.0,385.2 610.0,383.6 611.0,382.0 612.0,380.4 613.0,378.8 614.0,377.1 615.0,374.8 616.0,372.6 617.0,370.4 618.0,368.1 619.0,365.9 620.0,363.7 621.0,362.0 622.0,360.6 623.0,359.2 624.0,357.8 625.0,356.5 626.0,355.1 627.0,354.7 628.0,354.9 629.0,355.2 630.0,355.4 631.0,355.7 632.0,356.0 633.0,356.3 634.0,357.1 635.0,357.8 636.0,358.6 637.0,359.4 638.0,360.2 639.0,360.9 640.0,361.7 641.0,362.5 642.0,363.4 643.0,364.2 644.0,365.0 645.0,365.8 646.0,366.6 647.0,367.5 648.0,368.3 649.0,369.2 650.0,370.0 651.0,370.9 652.0,371.7 653.0,372.5 654.0,373.4 655.0,374.4 656.0,375.8 657.0,377.2 658.0,378.5 659.0,379.8 659.0,379.8 658.0,379.5 657.0,379.2 656.0,379.0 655.0,378.8 654.0,378.7 653.0,378.8 652.0,378.9 651.0,378.9 650.0,379.0 649.0,379.1 648.0,379.2 647.0,379.3 646.0,379.7 645.0,380.1 644.0,380.4 643.0,380.8 642.0,381.1 641.0,381.5 640.0,381.9 639.0,382.6 638.0,383.4 637.0,384.1 636.0,384.9 635.0,385.6 634.0,386.4 633.0,387.1 632.0,388.2 631.0,389.3 630.0,390.4 629.0,391.5 628.0,392.6 627.0,393.7 626.0,395.0 625.0,396.6 624.0,398.2 623.0,399.8 622.0,401.4 621.0,403.0 620.0,404.6 619.0,406.3 618.0,407.9 617.0,409.6 616.0,411.2 615.0,412.9 614.0,414.6 613.0,416.0 612.0,417.5 611.0,418.9 610.0,420.3 609.0,421.7 608.0,423.2 607.0,424.6 606.0,426.1 605.0,427.6 604.0,429.1 603.0,430.6 602.0,432.1 601.0,433.6 600.0,434.8 599.0,435.9 598.0,436.9 597.0,438.0 596.0,439.1 595.0,440.1 594.0,441.2 593.0,441.8 592.0,442.3 591.0,442.8 590.0,443.3 589.0,443.8 588.0,444.3 587.0,444.8 586.0,445.2 585.0,445.5 584.0,445.9 583.0,446.3 582.0,446.7 581.0,447.1 580.0,447.3 579.0,447.5 578.0,447.7 577.0,447.9 576.0,448.1 575.0,448.3 574.0,448.5 573.0,448.7 572.0,448.8 571.0,448.9 570.0,448.9 569.0,449.0 568.0,449.1 567.0,449.1 566.0,449.2 565.0,449.2 564.0,449.3 563.0,449.3 562.0,449.4 561.0,449.5 560.0,449.6 559.0,449.7 558.0,449.8 557.0,450.0 556.0,450.1 555.0,450.3 554.0,450.4 553.0,450.5 552.0,450.7 551.0,450.8 550.0,451.0 549.0,451.1 548.0,451.2 548.0,451.1" fill="#20b2aa" fill-opacity="0.44"/>
<polygon points="659.0,379.8 659.0,379.9 660.0,381.2 661.0,382.5 662.0,383.7 663.0,385.0 664.0,386.2 665.0,387.5 666.0,388.7 667.0,389.9 668.0,390.8 669.0,391.7 670.0,392.6 671.0,393.6 672.0,394.5 673.0,395.4 674.0,396.6 675.0,397.8 676.0,399.1 677.0,400.4 678.0,401.6 679.0,402.9 680.0,404.1 681.0,404.8 682.0,405.4 683.0,406.1 684.0,406.7 685.0,407.4 686.0,408.1 687.0,408.5 688.0,408.6 689.0,408.8 690.0,408.9 691.0,409.1 692.0,409.2 693.0,409.4 694.0,409.9 695.0,410.5 696.0,411.2 697.0,411.8 698.0,412.5 699.0,413.2 700.0,413.8 701.0,414.1 702.0,414.5 703.0,414.9 704.0,415.3 705.0,415.6 706.0,416.0 707.0,415.6 708.0,414.8 709.0,414.0 710.0,413.2 711.0,412.4 712.0,411.7 713.0,410.9 714.0,410.4 715.0,410.0 716.0,409.6 717.0,409.2 718.0,408.8 719.0,408.4 720.0,408.0 721.0,407.4 722.0,406.9 723.0,406.4 724.0,405.8 725.0,405.3 725.0,405.3 724.0,405.3 723.0,405.3 722.0,405.3 721.0,405.3 720.0,405.3 719.0,405.2 718.0,405.1 717.0,405.0 716.0,404.9 715.0,404.7 714.0,404.6 713.0,404.5 712.0,404.4 711.0,404.2 710.0,404.1 709.0,404.0 708.0,403.8 707.0,403.7 706.0,403.5 705.0,403.0 704.0,402.5 703.0,402.0 702.0,401.5 701.0,401.0 700.0,400.5 699.0,399.9 698.0,399.3 697.0,398.6 696.0,398.0 695.0,397.4 694.0,396.7 693.0,396.1 692.0,395.6 691.0,395.0 690.0,394.5 689.0,393.9 688.0,393.3 687.0,392.8 686.0,392.2 685.0,391.7 684.0,391.2 683.0,390.7 682.0,390.1 681.0,389.6 680.0,389.1 679.0,388.5 678.0,388.0 677.0,387.4 676.0,386.8 675.0,386.2 674.0,385.7 673.0,385.1 672.0,384.7 671.0,384.2 670.0,383.8 669.0,383.3 668.0,382.9 667.0,382.4 666.0,382.1 665.0,381.7 664.0,381.3 663.0,381.0 662.0,380.6 661.0,380.3 660.0,379.9 659.0,379.7 659.0,379.8" fill="#cccccc" fill-opacity="0.6"/>
<polygon points="725.0,405.3 725.0,405.3 726.0,404.7 727.0,405.2 728.0,406.0 728.0,406.0 727.0,405.4 726.0,405.3 725.0,405.3 725.0,405.3" fill="#20b2aa" fill-opacity="0.44"/>
<polygon points="728.0,406.0 728.0,406.5 729.0,407.7 730.0,408.9 731.0,410.2 732.0,411.4 733.0,412.6 734.0,413.5 735.0,414.4 736.0,415.3 737.0,416.2 738.0,417.1 739.0,418.0 740.0,418.8 741.0,419.6 742.0,420.3 743.0,421.0 744.0,421.8 745.0,422.5 746.0,423.3 747.0,424.1 748.0,425.1 749.0,426.0 750.0,426.9 751.0,427.8 752.0,428.8 753.0,429.8 754.0,431.3 755.0,432.7 756.0,434.1 757.0,435.5 758.0,437.0 759.0,438.4 760.0,439.7 761.0,440.8 762.0,441.9 763.0,443.0 764.0,444.1 765.0,445.2 766.0,446.3 766.0,425.8 765.0,424.9 764.0,424.0 763.0,423.0 762.0,422.1 761.0,421.2 760.0,420.3 759.0,419.4 758.0,418.7 757.0,418.0 756.0,417.3 755.0,416.6 754.0,415.8 753.0,415.1 752.0,414.5 751.0,414.0 750.0,413.4 749.0,412.9 748.0,412.3 747.0,411.7 746.0,411.2 745.0,410.8 744.0,410.3 743.0,409.9 742.0,409.4 741.0,409.0 740.0,408.5 739.0,408.2 738.0,407.9 737.0,407.6 736.0,407.4 735.0,407.1 734.0,406.8 733.0,406.5 732.0,406.3 731.0,406.1 730.0,406.0 729.0,405.8 728.0,405.6 728.0,406.0" fill="#cccccc" fill-opacity="0.6"/>
<polyline points="0.0,394.4 4.8,384.7 12.1,377.5 19.3,376.3 24.2,382.3 31.4,395.6 41.1,408.9 50.7,417.4 60.4,428.2 70.1,436.7 79.7,442.7 89.4,444.0 96.7,442.7 103.9,437.9 108.7,425.8 116.0,411.3 123.2,404.6 130.5,402.9 135.3,404.6 145.0,401.2 157.1,395.6 169.2,386.0 178.8,372.7 188.5,364.2 193.3,361.8 205.4,358.2 222.3,356.5 241.7,355.7 250.0,355.3 256.0,355.3 260.9,361.8 266.9,379.9 271.7,394.4 276.6,406.5 282.6,417.4 291.1,427.0 300.7,436.7 310.4,444.7 320.1,448.8 332.2,452.4 341.8,453.6 351.5,451.2 361.2,450.0 368.4,440.3 375.7,430.7 381.7,418.6 389.0,410.1 395.0,407.7 401.5,405.8 407.1,410.1 414.3,415.0 419.2,421.0 428.8,430.7 438.5,442.7 448.2,452.4 455.4,456.0 461.9,456.5 467.5,448.8 472.3,441.5 477.2,440.3 482.0,444.0 491.7,448.8 501.3,454.8 509.7,459.6 520.5,465.7 526.6,459.6 536.2,453.6 548.3,442.7 560.4,430.6 572.5,421.0 580.9,416.1 587.2,394.4 593.7,382.3 600.5,371.4 607.0,365.4 613.8,363.0 620.3,361.1 626.4,360.6 632.9,364.2 640.1,372.7 647.4,382.3 654.6,394.4 659.9,404.1 666.7,413.7 673.2,422.2 680.0,429.4 686.5,433.1 693.3,435.5 699.8,440.3 706.3,441.5 713.1,433.1 719.6,428.2 726.4,423.9 732.9,430.6 739.7,437.9 746.2,445.1 752.7,451.2 759.5,459.6 766.0,464.5" fill="none" stroke="#7a18ee" stroke-width="1.1" stroke-dasharray="2,2.2"/>
<polyline points="0.0,463.8 12.1,459.7 24.2,456.0 36.2,455.6 48.3,456.8 60.4,458.5 72.5,459.7 84.6,460.9 96.7,462.1 106.3,462.1 116.0,460.9 125.7,459.7 135.3,458.5 145.0,457.2 157.1,456.0 169.2,453.6 178.8,450.0 188.5,444.7 195.7,440.3 203.0,435.5 215.1,428.2 222.3,423.4 234.4,415.0 244.1,407.7 250.0,401.5 257.2,394.4 264.5,392.0 271.7,392.0 281.4,394.4 291.1,398.0 300.7,402.9 310.4,408.9 320.1,416.2 332.2,421.5 341.8,425.8 351.5,428.7 361.2,430.7 368.4,431.9 375.7,431.1 381.7,429.5 389.0,427.0 401.5,422.9 409.5,422.2 419.2,422.2 428.8,423.9 434.9,424.6 443.3,428.2 455.4,433.1 467.5,435.5 474.7,436.7 482.0,436.7 488.0,437.4 494.1,438.6 501.3,440.3 509.7,443.9 520.5,447.6 526.6,450.0 536.2,450.7 548.3,451.2 560.4,449.5 572.5,448.8 580.9,447.1 587.2,444.7 593.7,441.5 600.5,434.3 607.0,424.6 613.8,414.9 620.3,404.1 626.4,394.4 632.9,387.2 640.1,381.8 647.4,379.2 654.6,378.7 659.9,379.9 666.7,382.3 673.2,385.2 680.0,389.1 686.5,392.5 693.3,396.3 699.8,400.4 706.3,403.6 713.1,404.5 719.6,405.3 726.4,405.3 732.9,406.5 739.7,408.4 746.2,411.3 752.7,414.9 759.5,419.8 766.0,425.8" fill="none" stroke="#fff" stroke-width="1.5" stroke-linejoin="round"/>
<polyline points="0.0,459.7 7.2,453.6 17.4,449.5" fill="none" stroke="#ffffff" stroke-width="2" stroke-linejoin="round" stroke-linecap="butt"/>
<polyline points="17.4,449.5 26.6,452.4 36.2,454.1 48.3,457.2 60.4,459.7 72.5,462.1 83.4,464.0" fill="none" stroke="#ff0000" stroke-width="2" stroke-linejoin="round" stroke-linecap="butt"/>
<polyline points="83.4,464.0 90.6,463.3" fill="none" stroke="#ffffff" stroke-width="2" stroke-linejoin="round" stroke-linecap="butt"/>
<polyline points="90.6,463.3 96.7,464.5" fill="none" stroke="#ff0000" stroke-width="2" stroke-linejoin="round" stroke-linecap="butt"/>
<polyline points="96.7,464.5 106.3,462.1 116.0,458.5 125.7,457.2 135.3,456.0 145.0,454.8 157.1,453.6 169.2,450.0 178.8,444.0 188.5,433.1 195.7,424.6 203.0,416.2 215.1,410.8 222.3,402.9 234.4,396.3 244.1,386.0 250.0,380.5 255.3,376.5" fill="none" stroke="#ffffff" stroke-width="2" stroke-linejoin="round" stroke-linecap="butt"/>
<polyline points="255.3,376.5 262.1,379.4 269.3,389.6 279.0,401.7 288.7,410.1 298.3,417.4 308.0,425.8 315.2,429.5 321.3,429.5 329.7,432.6 337.0,436.0 347.9,436.5" fill="none" stroke="#ff0000" stroke-width="2" stroke-linejoin="round" stroke-linecap="butt"/>
<polyline points="347.9,436.5 355.6,435.5" fill="none" stroke="#ffffff" stroke-width="2" stroke-linejoin="round" stroke-linecap="butt"/>
<polyline points="355.6,435.5 361.2,436.5" fill="none" stroke="#ff0000" stroke-width="2" stroke-linejoin="round" stroke-linecap="butt"/>
<polyline points="361.2,436.5 368.4,431.9 375.7,431.1 381.7,424.6 389.0,418.6 401.5,416.6" fill="none" stroke="#ffffff" stroke-width="2" stroke-linejoin="round" stroke-linecap="butt"/>
<polyline points="401.5,416.6 409.5,418.6 419.2,422.2 428.8,428.2 438.5,434.3 448.2,440.3 455.4,441.5 461.9,443.2" fill="none" stroke="#ff0000" stroke-width="2" stroke-linejoin="round" stroke-linecap="butt"/>
<polyline points="461.9,443.2 467.5,441.5 474.7,438.6" fill="none" stroke="#ffffff" stroke-width="2" stroke-linejoin="round" stroke-linecap="butt"/>
<polyline points="474.7,438.6 482.0,439.6 488.0,442.7 494.1,443.5 501.3,446.4 509.7,451.2 520.5,456.0" fill="none" stroke="#ff0000" stroke-width="2" stroke-linejoin="round" stroke-linecap="butt"/>
<polyline points="520.5,456.0 531.4,453.1 543.5,451.9 555.6,449.5 567.6,446.3 580.9,443.9 587.2,435.5 593.7,424.6 600.5,406.5 607.0,388.4 613.8,377.5 620.3,363.0 626.4,354.5" fill="none" stroke="#ffffff" stroke-width="2" stroke-linejoin="round" stroke-linecap="butt"/>
<polyline points="626.4,354.5 632.9,356.2 640.1,361.8 647.4,367.8 654.6,373.9 659.9,381.1 666.7,389.6 673.2,395.6 680.0,404.1 686.5,408.4 693.3,409.4 699.8,413.7 706.3,416.1" fill="none" stroke="#ff0000" stroke-width="2" stroke-linejoin="round" stroke-linecap="butt"/>
<polyline points="706.3,416.1 713.1,410.8 719.6,408.2 726.4,404.5" fill="none" stroke="#ffffff" stroke-width="2" stroke-linejoin="round" stroke-linecap="butt"/>
<polyline points="726.4,404.5 732.9,412.5 739.7,418.6 746.2,423.4 752.7,429.4 759.5,439.1 766.0,446.3" fill="none" stroke="#ff0000" stroke-width="2" stroke-linejoin="round" stroke-linecap="butt"/>
</g>
<g clip-path="url(#cp3)">
<polygon points="176.0,531.5 176.0,529.8 176.5,528.9 177.0,528.8 177.5,528.8 178.0,528.8 178.5,528.7 179.0,528.7 179.5,528.7 180.0,528.6 180.5,528.6 181.0,528.5 181.5,528.5 182.0,528.5 182.5,528.4 183.0,528.0 183.5,526.5 184.0,524.9 184.5,523.4 185.0,521.9 185.5,520.3 186.0,518.8 186.5,517.3 187.0,515.7 187.5,514.2 188.0,512.6 188.5,511.1 189.0,509.6 189.5,508.0 190.0,508.0 190.5,508.0 191.0,508.0 191.5,508.0 192.0,508.0 192.5,508.0 193.0,508.0 193.5,508.0 194.0,508.0 194.5,508.0 195.0,508.0 195.5,508.0 196.0,508.0 196.5,507.6 197.0,507.1 197.5,506.7 198.0,506.2 198.5,505.7 199.0,505.2 199.5,504.7 200.0,504.2 200.5,503.7 201.0,503.2 201.5,502.7 202.0,502.2 202.5,501.8 203.0,502.8 203.5,505.4 204.0,508.0 204.5,510.6 205.0,513.3 205.5,515.9 206.0,518.5 206.5,521.1 207.0,523.8 207.5,526.4 208.0,529.0 208.0,531.5" fill="#10566f"/>
<polygon points="218.0,531.5 218.0,530.1 218.5,528.6 219.0,527.0 219.5,525.5 220.0,523.9 220.5,522.4 221.0,520.8 221.5,519.2 222.0,517.7 222.5,516.1 223.0,516.7 223.5,518.1 224.0,519.5 224.5,520.9 225.0,522.4 225.5,523.8 226.0,525.2 226.5,526.6 227.0,528.0 227.5,529.4 228.0,530.8 228.0,531.5" fill="#10566f"/>
<polygon points="236.5,531.5 236.5,530.8 237.0,529.9 237.5,528.9 238.0,528.0 238.5,527.0 239.0,526.0 239.5,525.1 240.0,524.1 240.5,523.2 241.0,522.2 241.5,521.3 242.0,520.3 242.5,519.3 243.0,519.3 243.5,519.2 244.0,519.2 244.5,519.2 245.0,519.1 245.5,519.1 246.0,519.0 246.5,519.0 247.0,519.0 247.5,518.9 248.0,518.9 248.5,518.8 249.0,518.8 249.5,519.3 250.0,520.0 250.5,520.8 251.0,521.5 251.5,522.2 252.0,522.9 252.5,523.7 253.0,524.4 253.5,525.1 254.0,525.8 254.5,526.6 255.0,527.3 255.5,528.0 256.0,529.0 256.5,530.5 256.5,531.5" fill="#10566f"/>
<polygon points="586.0,531.5 586.0,530.8 586.5,528.2 587.0,525.5 587.5,524.5 588.0,524.1 588.5,523.7 589.0,523.2 589.5,522.8 590.0,522.4 590.5,522.0 591.0,521.6 591.5,521.2 592.0,520.8 592.5,520.3 593.0,519.9 593.5,519.5 594.0,518.8 594.5,517.9 595.0,516.9 595.5,516.0 596.0,515.1 596.5,514.1 597.0,513.2 597.5,512.2 598.0,511.3 598.5,510.3 599.0,509.4 599.5,508.5 600.0,507.5 600.5,506.7 601.0,506.1 601.5,505.5 602.0,504.9 602.5,504.3 603.0,503.7 603.5,503.1 604.0,502.5 604.5,501.9 605.0,501.3 605.5,500.7 606.0,500.1 606.5,499.5 607.0,498.9 607.5,500.6 608.0,502.2 608.5,503.9 609.0,505.6 609.5,507.3 610.0,509.0 610.5,510.7 611.0,512.3 611.5,514.0 612.0,515.7 612.5,517.4 613.0,519.1 613.5,520.7 614.0,520.8 614.5,520.2 615.0,519.6 615.5,519.0 616.0,518.5 616.5,517.9 617.0,517.3 617.5,516.7 618.0,516.1 618.5,515.5 619.0,515.0 619.5,514.4 620.0,513.8 620.5,514.0 621.0,515.0 621.5,516.1 622.0,517.1 622.5,518.1 623.0,519.2 623.5,520.2 624.0,521.2 624.5,522.3 625.0,523.3 625.5,524.3 626.0,525.4 626.5,526.4 627.0,527.5 627.5,529.0 628.0,530.4 628.0,531.5" fill="#10566f"/>
<rect x="0" y="530.9" width="1450" height="1.2" fill="#1ea4e8"/>
<line x1="0" y1="566.4" x2="1450" y2="566.4" stroke="#b0b0b0" stroke-width="1" stroke-dasharray="2,2"/>
<rect x="0" y="599.8" width="1450" height="1.2" fill="#f59512"/>
<polyline points="0.0,572.8 4.0,559.3 10.6,537.5 17.2,559.6 23.8,572.8 30.5,580.5 37.1,580.5 43.7,580.5 50.3,580.5 57.0,584.8 63.6,589.2 70.2,589.6 76.8,594.4 83.5,594.4 90.1,584.4 96.7,590.1 103.4,580.5 110.0,563.2 116.6,556.5 123.2,564.4 129.9,572.8 136.5,579.3 143.1,570.4 149.7,570.4 156.4,570.4 163.0,559.6 169.6,552.4 176.3,528.9 182.9,528.4 189.5,508.0 196.1,508.0 202.8,501.5 209.4,536.3 216.0,536.3 222.6,515.7 229.3,534.4 235.9,532.0 242.5,519.3 249.1,518.8 255.8,528.4 262.4,547.6 269.0,566.8 275.7,573.6 282.3,570.4 288.9,564.4 295.5,570.4 302.2,573.3 308.8,579.6 315.4,572.8 322.0,561.6 328.7,571.6 335.3,575.2 341.9,568.0 348.6,560.8 355.2,560.8 361.8,568.8 368.4,545.7 375.1,557.2 381.7,539.9 388.3,537.5 394.9,549.3 401.6,549.3 408.2,561.3 414.8,561.3 421.5,568.5 428.1,568.5 434.7,580.5 441.3,580.5 448.0,584.4 454.6,573.6 461.2,577.2 467.8,554.4 474.5,550.5 481.1,564.4 487.7,577.2 494.3,572.8 501.0,580.4 507.6,587.2 514.2,587.5 520.9,590.4 527.5,564.5 534.1,568.1 540.7,564.5 547.4,569.3 554.0,559.7 560.6,559.7 567.2,559.7 573.9,553.6 580.5,560.4 587.1,524.8 593.8,519.3 600.4,506.8 607.0,498.9 613.6,521.2 620.3,513.5 626.9,527.2 633.5,546.4 640.1,554.8 646.8,557.3 653.4,557.3 660.0,564.0 666.6,566.9 673.3,567.3 679.9,572.4 686.5,563.3 693.2,558.5 699.8,567.3 706.4,564.0 713.0,540.4 719.7,547.2 726.3,541.6 732.9,572.1 739.5,572.1 746.2,572.4 752.8,575.3 759.4,592.1 766.1,585.3" fill="none" stroke="#fff" stroke-width="1.5" stroke-linejoin="round"/>
</g>
<rect x="407.85" y="24" width="1.25" height="196" fill="#8200ff"/>
<rect x="593.0" y="24" width="1.2" height="196" fill="#1e5cff"/>
<rect x="918" y="24" width="1" height="196" fill="#c0c0c0"/>
<rect x="407.85" y="223" width="1.25" height="111" fill="#8200ff"/>
<rect x="593.0" y="223" width="1.2" height="111" fill="#1e5cff"/>
<rect x="918" y="223" width="1" height="111" fill="#c0c0c0"/>
<rect x="407.85" y="342" width="1.25" height="136" fill="#8200ff"/>
<rect x="593.0" y="342" width="1.2" height="136" fill="#1e5cff"/>
<rect x="918" y="342" width="1" height="136" fill="#c0c0c0"/>
<rect x="407.85" y="486" width="1.25" height="137" fill="#8200ff"/>
<rect x="593.0" y="486" width="1.2" height="137" fill="#1e5cff"/>
<rect x="918" y="486" width="1" height="137" fill="#c0c0c0"/>
<rect x="5.2" y="55.5" width="17.5" height="18" fill="#000" stroke="#2c2c2c" stroke-width="1"/>
<path d="M9.2 59.7L18.8 69.3M18.8 59.7L9.2 69.3" stroke="#fff" stroke-width="3.2" fill="none"/>
<rect x="24.4" y="55.5" width="17.5" height="18" fill="#000" stroke="#2c2c2c" stroke-width="1"/>
<rect x="28.0" y="67.7" width="10" height="3.2" fill="#fff"/>
<rect x="42.7" y="55.5" width="147.0" height="18" fill="#000" stroke="#2c2c2c" stroke-width="1"/>
<text x="42.8" y="69.2" font-family="Liberation Sans, Arial, sans-serif" font-size="14" fill="#fff">B Bands (20, 0, 2, 2, S)</text>
<rect x="5.2" y="77.5" width="17.5" height="18" fill="#000" stroke="#2c2c2c" stroke-width="1"/>
<path d="M9.2 81.7L18.8 91.3M18.8 81.7L9.2 91.3" stroke="#fff" stroke-width="3.2" fill="none"/>
<rect x="24.4" y="77.5" width="17.5" height="18" fill="#000" stroke="#2c2c2c" stroke-width="1"/>
<rect x="28.0" y="89.7" width="10" height="3.2" fill="#fff"/>
<rect x="42.7" y="77.5" width="82.0" height="18" fill="#000" stroke="#2c2c2c" stroke-width="1"/>
<text x="42.8" y="91.2" font-family="Liberation Sans, Arial, sans-serif" font-size="14" fill="#fff">Vol. / Prc. (6)</text>
<rect x="5.2" y="99.6" width="17.5" height="18" fill="#000" stroke="#2c2c2c" stroke-width="1"/>
<path d="M9.2 103.8L18.8 113.4M18.8 103.8L9.2 113.4" stroke="#fff" stroke-width="3.2" fill="none"/>
<rect x="24.4" y="99.6" width="17.5" height="18" fill="#000" stroke="#2c2c2c" stroke-width="1"/>
<rect x="28.0" y="111.8" width="10" height="3.2" fill="#fff"/>
<rect x="42.7" y="99.6" width="75.8" height="18" fill="#000" stroke="#2c2c2c" stroke-width="1"/>
<text x="42.8" y="113.3" font-family="Liberation Sans, Arial, sans-serif" font-size="14" fill="#fff">EMA (20, 0)</text>
<rect x="5.2" y="226.4" width="17.5" height="18" fill="#000" stroke="#2c2c2c" stroke-width="1"/>
<path d="M9.2 230.6L18.8 240.2M18.8 230.6L9.2 240.2" stroke="#00ff00" stroke-width="3.2" fill="none"/>
<rect x="24.4" y="226.4" width="17.5" height="18" fill="#000" stroke="#2c2c2c" stroke-width="1"/>
<rect x="28.0" y="238.6" width="10" height="3.2" fill="#00ff00"/>
<rect x="42.7" y="226.4" width="48.0" height="18" fill="#000" stroke="#2c2c2c" stroke-width="1"/>
<text x="42.8" y="240.1" font-family="Liberation Sans, Arial, sans-serif" font-size="14" fill="#00ff00">Volume</text>
<rect x="5.2" y="344.4" width="17.5" height="18" fill="#000" stroke="#2c2c2c" stroke-width="1"/>
<path d="M9.2 348.6L18.8 358.2M18.8 348.6L9.2 358.2" stroke="#fff" stroke-width="3.2" fill="none"/>
<rect x="24.4" y="344.4" width="17.5" height="18" fill="#000" stroke="#2c2c2c" stroke-width="1"/>
<rect x="28.0" y="356.6" width="10" height="3.2" fill="#fff"/>
<rect x="42.7" y="344.4" width="110.0" height="18" fill="#000" stroke="#2c2c2c" stroke-width="1"/>
<text x="42.8" y="358.1" font-family="Liberation Sans, Arial, sans-serif" font-size="14" fill="#fff">MACD (12, 26, 9)</text>
<rect x="1.2" y="364.6" width="17.5" height="18" fill="#000" stroke="#2c2c2c" stroke-width="1"/>
<path d="M5.2 368.8L14.8 378.4M14.8 368.8L5.2 378.4" stroke="#7812f2" stroke-width="3.2" fill="none"/>
<rect x="20.4" y="364.6" width="17.5" height="18" fill="#000" stroke="#2c2c2c" stroke-width="1"/>
<rect x="24.0" y="376.8" width="10" height="3.2" fill="#7812f2"/>
<rect x="38.7" y="364.6" width="99.8" height="18" fill="#000" stroke="#2c2c2c" stroke-width="1"/>
<text x="40.1" y="378.3" font-family="Liberation Sans, Arial, sans-serif" font-size="14" fill="#7812f2">MACD RSI (10)</text>
<rect x="5.2" y="488.3" width="17.5" height="18" fill="#000" stroke="#2c2c2c" stroke-width="1"/>
<path d="M9.2 492.5L18.8 502.1M18.8 492.5L9.2 502.1" stroke="#fff" stroke-width="3.2" fill="none"/>
<rect x="24.4" y="488.3" width="17.5" height="18" fill="#000" stroke="#2c2c2c" stroke-width="1"/>
<rect x="28.0" y="500.5" width="10" height="3.2" fill="#fff"/>
<rect x="42.7" y="488.3" width="68.7" height="18" fill="#000" stroke="#2c2c2c" stroke-width="1"/>
<text x="42.8" y="502.0" font-family="Liberation Sans, Arial, sans-serif" font-size="14" fill="#fff">RSI (10, 0)</text>
<text x="1458.3" y="37" font-family="Liberation Sans, Arial, sans-serif" font-size="14" fill="#fff">0.450</text>
<polygon points="1448.5,69.2 1460.5,57.2 1503.0,57.2 1503.0,81.2 1460.5,81.2" fill="#fff"/>
<text x="1462.5" y="75.0" font-family="Liberation Sans, Arial, sans-serif" font-size="14" fill="#222">0.388</text>
<text x="1458.3" y="96" font-family="Liberation Sans, Arial, sans-serif" font-size="14" fill="#fff">0.350</text>
<polygon points="1448.5,103.2 1460.5,91.2 1503.0,91.2 1503.0,115.2 1460.5,115.2" fill="#fff"/>
<text x="1462.5" y="109.0" font-family="Liberation Sans, Arial, sans-serif" font-size="14" fill="#222">0.331</text>
<polygon points="1448.5,129.0 1460.5,117.0 1503.0,117.0 1503.0,141.0 1460.5,141.0" fill="#fff"/>
<text x="1462.5" y="133.6" font-family="Liberation Sans, Arial, sans-serif" font-size="14" fill="#222">0.292</text>
<rect x="1451" y="114" width="85" height="19" fill="#eeeeee"/>
<text x="1457.8" y="129" font-family="Liberation Sans, Arial, sans-serif" font-size="14" fill="#000" font-weight="bold">0.295</text>
<text x="1458.3" y="157.3" font-family="Liberation Sans, Arial, sans-serif" font-size="14" fill="#fff">0.250</text>
<text x="1458.3" y="187.4" font-family="Liberation Sans, Arial, sans-serif" font-size="14" fill="#fff" font-weight="bold">0.200</text>
<rect x="1451" y="198" width="85" height="19" fill="#eeeeee"/>
<text x="1457.8" y="213" font-family="Liberation Sans, Arial, sans-serif" font-size="14" fill="#000" font-weight="bold">0.153</text>
<text x="1458.8" y="234.5" font-family="Liberation Sans, Arial, sans-serif" font-size="14" fill="#fff" font-weight="bold">70.00M</text>
<text x="1458.8" y="262.4" font-family="Liberation Sans, Arial, sans-serif" font-size="14" fill="#fff" font-weight="bold">50.00M</text>
<text x="1458.8" y="291.3" font-family="Liberation Sans, Arial, sans-serif" font-size="14" fill="#fff" font-weight="bold">30.00M</text>
<rect x="1451" y="296.2" width="85" height="18.6" fill="#00ff00"/>
<text x="1458.3" y="310.8" font-family="Liberation Sans, Arial, sans-serif" font-size="14" fill="#fff" font-weight="bold">15,591,067</text>
<text x="1458.8" y="334" font-family="Liberation Sans, Arial, sans-serif" font-size="14" fill="#fff" font-weight="bold">-0.00</text>
<text x="1458.5" y="365.1" font-family="Liberation Sans, Arial, sans-serif" font-size="14" fill="#fff" font-weight="bold">0.040</text>
<text x="1458.5" y="386.1" font-family="Liberation Sans, Arial, sans-serif" font-size="14" fill="#fff" font-weight="bold">0.030</text>
<text x="1458.5" y="407.1" font-family="Liberation Sans, Arial, sans-serif" font-size="14" fill="#fff" font-weight="bold">0.020</text>
<polygon points="1448.5,424.6 1460.5,412.6 1510.0,412.6 1510.0,436.6 1460.5,436.6" fill="#fff"/>
<text x="1462.5" y="430.4" font-family="Liberation Sans, Arial, sans-serif" font-size="14" fill="#222">0.0094</text>
<polygon points="1448.5,445.6 1460.5,433.6 1514.8,433.6 1514.8,457.6 1460.5,457.6" fill="#fff"/>
<text x="1462.5" y="451.4" font-family="Liberation Sans, Arial, sans-serif" font-size="14" fill="#222">-0.0005</text>
<polygon points="1448.5,465.6 1460.5,453.6 1514.8,453.6 1514.8,477.6 1460.5,477.6" fill="#20ac9d"/>
<text x="1462.5" y="471.4" font-family="Liberation Sans, Arial, sans-serif" font-size="14" fill="#111">-0.0099</text>
<text x="1465.7" y="538.2" font-family="Liberation Sans, Arial, sans-serif" font-size="14" fill="#fff" font-weight="bold">70.00%</text>
<text x="1465.7" y="573" font-family="Liberation Sans, Arial, sans-serif" font-size="14" fill="#fff" font-weight="bold">50.00%</text>
<polygon points="1448.5,584.2 1460.5,572.2 1515.0,572.2 1515.0,596.2 1460.5,596.2" fill="#fff"/>
<text x="1462.5" y="590.0" font-family="Liberation Sans, Arial, sans-serif" font-size="14" fill="#222">38.58%</text>
<text x="1465.7" y="607.3" font-family="Liberation Sans, Arial, sans-serif" font-size="14" fill="#fff" font-weight="bold">30.00%</text>
</svg>
</body></html>
